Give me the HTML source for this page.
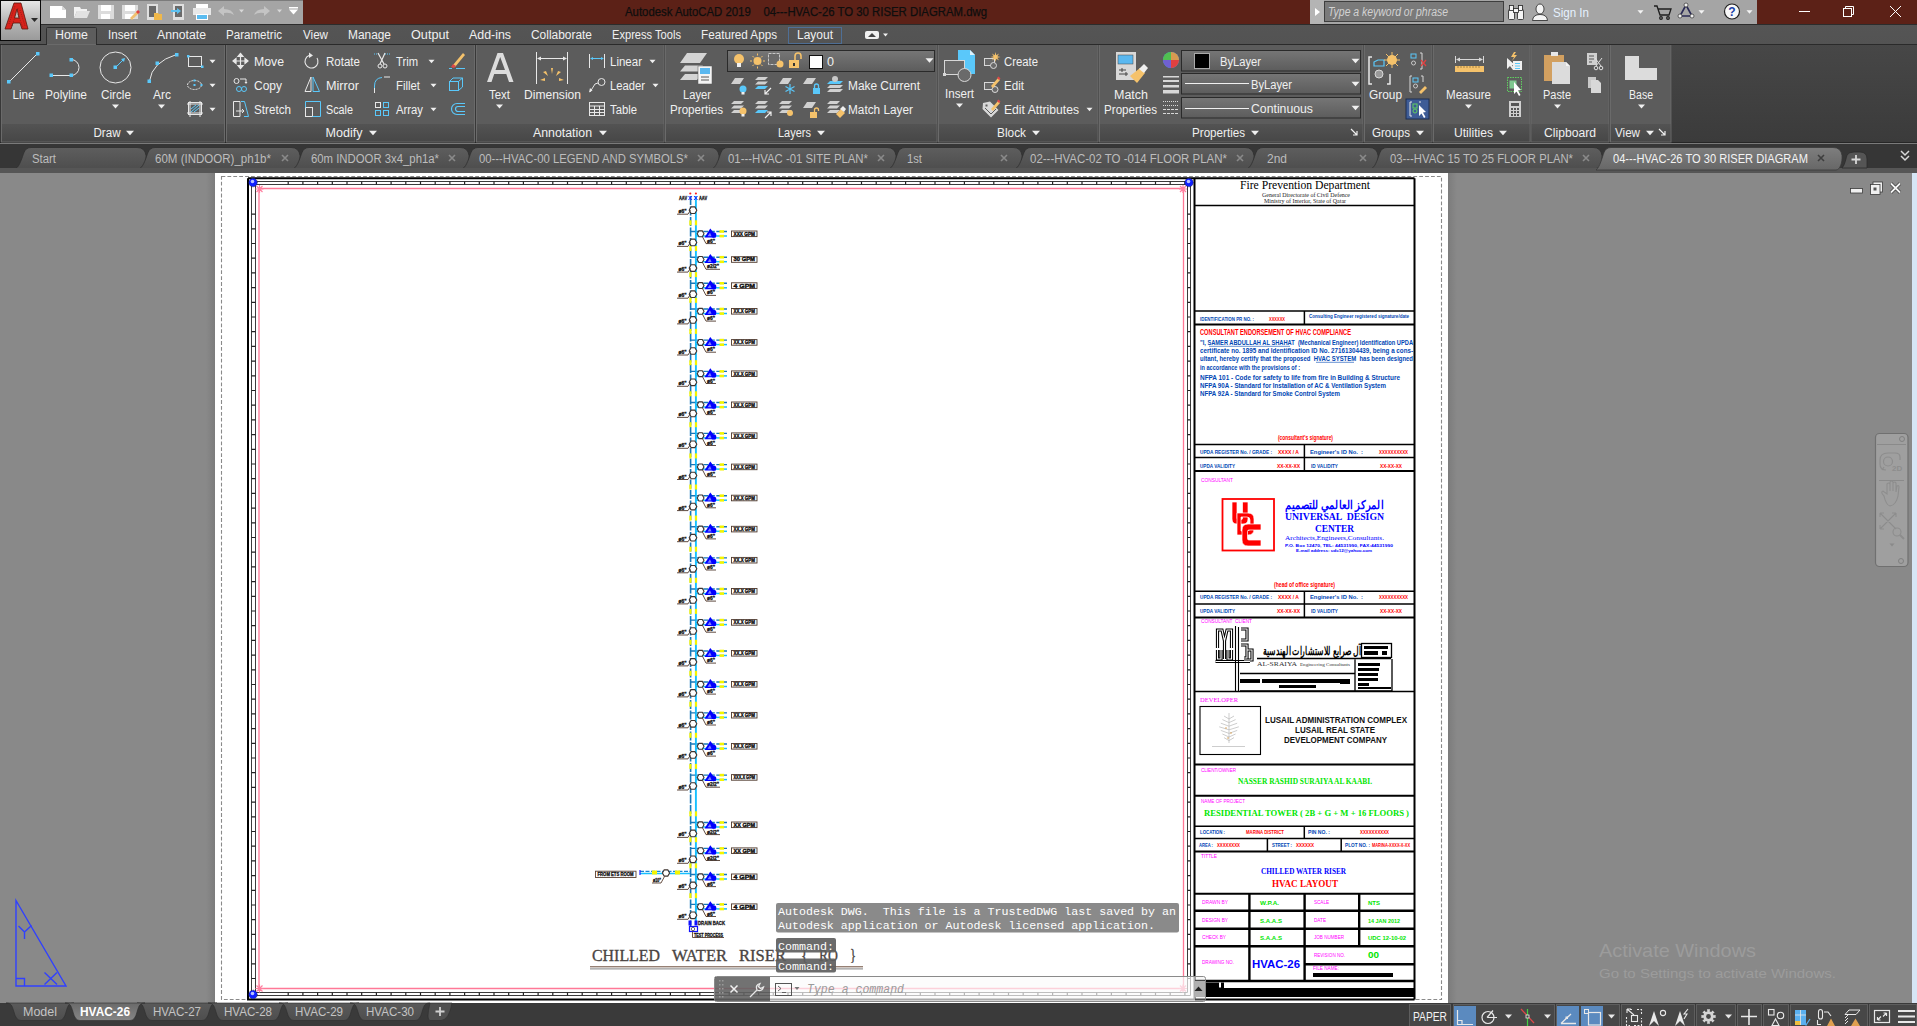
<!DOCTYPE html>
<html><head><meta charset="utf-8"><title>AutoCAD</title>
<style>html,body{margin:0;padding:0;width:1917px;height:1026px;overflow:hidden;background:#898989;}
svg{position:absolute;left:0;top:0;display:block;}
text{white-space:pre;}</style></head>
<body><svg width="1917" height="1026" viewBox="0 0 1917 1026" font-family="Liberation Sans, sans-serif">
<rect x="0" y="0" width="1917" height="24" fill="#5c2117"/>
<rect x="41" y="0" width="262" height="24" fill="#a5a5a5"/>
<rect x="41" y="0" width="262" height="1" fill="#7c7c7c"/>
<rect x="1310" y="0" width="447" height="24" fill="#a5a5a5"/>
<rect x="1310" y="0" width="14" height="24" fill="#b4b4b4"/>
<path d="M1315,8 L1320,12 L1315,16 Z" fill="#ffffff"/>
<rect x="1324.5" y="1.5" width="179" height="20" fill="#7a7a7a" stroke="#3e3e3e" stroke-width="1"/>
<text x="1328" y="16" font-size="12" fill="#d2d2d2" text-anchor="start" font-weight="normal" font-style="italic" font-family="Liberation Sans" textLength="120" lengthAdjust="spacingAndGlyphs" >Type a keyword or phrase</text>
<g fill="#f4f4f4" stroke="#222" stroke-width="0.8"><rect x="1508.5" y="9.5" width="6" height="10" rx="1"/><rect x="1517.5" y="9.5" width="6" height="10" rx="1"/><rect x="1509.5" y="5.5" width="4" height="5"/><rect x="1518.5" y="5.5" width="4" height="5"/><rect x="1513.5" y="8.5" width="5" height="4"/></g>
<g fill="#f4f4f4" stroke="#222" stroke-width="0.8"><ellipse cx="1540" cy="9" rx="4" ry="5"/><path d="M1532.5,20.5 Q1533,14.5 1540,14.5 Q1547,14.5 1547.5,20.5 Z"/></g>
<text x="1553" y="17" font-size="13" fill="#e6f2ff" text-anchor="start" font-weight="normal" font-style="normal" font-family="Liberation Sans" textLength="36" lengthAdjust="spacingAndGlyphs" >Sign In</text>
<path d="M1637.5,10.25 L1643.5,10.25 L1640.5,13.75 Z" fill="#f4f4f4"/>
<g fill="none" stroke="#1e1e1e" stroke-width="1.3"><path d="M1654,6 L1657,6 L1660,15 L1669,15 L1671,9 L1658,9"/><circle cx="1661" cy="18" r="1.3"/><circle cx="1668" cy="18" r="1.3"/></g>
<g fill="none" stroke="#2a2a55" stroke-width="1.6"><path d="M1686,5 L1680,16 L1692,16 Z"/></g><g fill="#f0f0f0" stroke="#333" stroke-width="0.7"><circle cx="1686" cy="5" r="2"/><circle cx="1680" cy="16" r="2"/><circle cx="1692" cy="16" r="2"/></g>
<path d="M1698.5,10.25 L1704.5,10.25 L1701.5,13.75 Z" fill="#f4f4f4"/>
<circle cx="1732" cy="11.5" r="7.5" fill="#f8f8f8" stroke="#222" stroke-width="1.2"/>
<text x="1732" y="16" font-size="12" fill="#1a3fa8" text-anchor="middle" font-weight="bold" font-style="normal" font-family="Liberation Sans" >?</text>
<path d="M1746.5,10.25 L1752.5,10.25 L1749.5,13.75 Z" fill="#f4f4f4"/>
<g stroke="#ffffff" stroke-width="1" fill="none"><path d="M1799,11.5 L1810,11.5"/><rect x="1843.5" y="8.5" width="8" height="8"/><path d="M1845.5,8.5 L1845.5,6.5 L1853.5,6.5 L1853.5,14.5 L1851.5,14.5"/><path d="M1890,6 L1901,17 M1901,6 L1890,17"/></g>
<text x="625" y="16" font-size="12.5" fill="#0e0e0e" text-anchor="start" font-weight="normal" font-style="normal" font-family="Liberation Sans" textLength="362" lengthAdjust="spacingAndGlyphs" stroke="#0e0e0e" stroke-width="0.25">Autodesk AutoCAD 2019    04---HVAC-26 TO 30 RISER DIAGRAM.dwg</text>
<path d="M50,6 L62,6 L66,10 L66,18 L50,18 Z" fill="#ffffff"/><path d="M62,6 L62,10 L66,10 Z" fill="#d8d8d8"/>
<path d="M74,7 L80,7 L81,9 L87,9 L87,11 L77,11 L74,18 Z" fill="#f2f2f2"/><path d="M77,11 L90,11 L87,18 L74,18 Z" fill="#e2e2e2"/>
<path d="M98,5 L114,5 L114,19 L98,19 Z" fill="#dcdcdc"/><rect x="101" y="5" width="10" height="6" fill="#ffffff"/><rect x="101" y="14" width="9" height="5" fill="#ffffff"/>
<path d="M122,5 L138,5 L138,19 L122,19 Z" fill="#dcdcdc"/><rect x="125" y="5" width="10" height="6" fill="#ffffff"/><rect x="125" y="14" width="9" height="5" fill="#ffffff"/><path d="M130,18 L137,11 L139,13 L132,20 Z" fill="#f0c070"/><path d="M136,12 L138,10 L140,12 L138,14 Z" fill="#e04040"/>
<rect x="147" y="4" width="11" height="16" fill="#e0e0e0"/><rect x="149" y="6" width="7" height="11" fill="#6a6a6a"/><path d="M154,13 L158,13 L159,14 L162,14 L162,20 L154,20 Z" fill="#f0b84a"/>
<rect x="173" y="4" width="11" height="16" fill="#e0e0e0"/><rect x="175" y="6" width="7" height="11" fill="#6a6a6a"/><path d="M171,10 L177,10 L177,8 L181,11 L177,14 L177,12 L171,12 Z" fill="#5bc0f0"/>
<rect x="196" y="4" width="12" height="5" fill="#ffffff"/><rect x="193" y="8" width="18" height="7" fill="#e8e8e8"/><rect x="196" y="14" width="12" height="6" fill="#ffffff"/><rect x="197" y="15" width="10" height="4" fill="#5bbcf0"/>
<path d="M218,11 L224,6 L224,9 Q232,9 234,15 Q230,12 224,13 L224,16 Z" fill="#c4c4c4"/>
<path d="M239.0,9.5 L244.0,9.5 L241.5,12.5 Z" fill="#d8d8d8"/>
<path d="M270,11 L264,6 L264,9 Q256,9 254,15 Q258,12 264,13 L264,16 Z" fill="#c4c4c4"/>
<path d="M277.0,9.5 L282.0,9.5 L279.5,12.5 Z" fill="#d8d8d8"/>
<rect x="289" y="7" width="9" height="1.5" fill="#ffffff"/><path d="M289.0,9.5 L298.0,9.5 L293.5,14.5 Z" fill="#ffffff"/>
<defs><linearGradient id="appg" x1="0" y1="0" x2="0" y2="1"><stop offset="0" stop-color="#e6e6e6"/><stop offset="0.5" stop-color="#b8b8b8"/><stop offset="1" stop-color="#9a9a9a"/></linearGradient><linearGradient id="tabrow" x1="0" y1="0" x2="0" y2="1"><stop offset="0" stop-color="#555555"/><stop offset="1" stop-color="#535353"/></linearGradient><linearGradient id="ptitle" x1="0" y1="0" x2="0" y2="1"><stop offset="0" stop-color="#535353"/><stop offset="1" stop-color="#474747"/></linearGradient><linearGradient id="emptyg" x1="0" y1="0" x2="0" y2="1"><stop offset="0" stop-color="#474747"/><stop offset="1" stop-color="#3b3b3b"/></linearGradient><linearGradient id="dtab" x1="0" y1="0" x2="0" y2="1"><stop offset="0" stop-color="#5e5e5e"/><stop offset="1" stop-color="#4e4e4e"/></linearGradient><linearGradient id="dtaba" x1="0" y1="0" x2="0" y2="1"><stop offset="0" stop-color="#7e7e7e"/><stop offset="1" stop-color="#676767"/></linearGradient><linearGradient id="combo" x1="0" y1="0" x2="0" y2="1"><stop offset="0" stop-color="#767676"/><stop offset="1" stop-color="#5c5c5c"/></linearGradient></defs>
<rect x="0" y="24" width="1917" height="20" fill="url(#tabrow)"/>
<rect x="0" y="24" width="1917" height="1" fill="#2c2c2c"/>
<rect x="0" y="0" width="41" height="41" fill="#0a0a0a"/>
<rect x="1" y="1" width="39" height="39" fill="url(#appg)"/>
<path d="M5,29 L14,3 L21,3 L28,29 L22,29 L20,23 L13,23 L11,29 Z M14.5,18 L19,18 L17,9 Z" fill="#d8221c" stroke="#5a1a10" stroke-width="0.8"/>
<path d="M9,24 L15,6 M12,26 L18,8 M20,10 L25,26 M18,14 L23,28" stroke="#7a1a12" stroke-width="0.8" stroke-dasharray="1,1.2" opacity="0.8"/>
<path d="M31,18 L38,18 L34.5,22 Z" fill="#2a2a2a"/>
<path d="M46.5,45 L46.5,28.5 Q46.5,27.5 47.5,27.5 L95.5,27.5 Q96.5,27.5 96.5,28.5 L96.5,45" fill="#5d5d5d" stroke="#2e2e2e" stroke-width="1"/>
<text x="55" y="39" font-size="12.5" fill="#f0f0f0" text-anchor="start" font-weight="normal" font-style="normal" font-family="Liberation Sans" textLength="33" lengthAdjust="spacingAndGlyphs" >Home</text>
<text x="108" y="39" font-size="12.5" fill="#f0f0f0" text-anchor="start" font-weight="normal" font-style="normal" font-family="Liberation Sans" textLength="29" lengthAdjust="spacingAndGlyphs" >Insert</text>
<text x="157" y="39" font-size="12.5" fill="#f0f0f0" text-anchor="start" font-weight="normal" font-style="normal" font-family="Liberation Sans" textLength="49" lengthAdjust="spacingAndGlyphs" >Annotate</text>
<text x="226" y="39" font-size="12.5" fill="#f0f0f0" text-anchor="start" font-weight="normal" font-style="normal" font-family="Liberation Sans" textLength="56" lengthAdjust="spacingAndGlyphs" >Parametric</text>
<text x="303" y="39" font-size="12.5" fill="#f0f0f0" text-anchor="start" font-weight="normal" font-style="normal" font-family="Liberation Sans" textLength="25" lengthAdjust="spacingAndGlyphs" >View</text>
<text x="348" y="39" font-size="12.5" fill="#f0f0f0" text-anchor="start" font-weight="normal" font-style="normal" font-family="Liberation Sans" textLength="43" lengthAdjust="spacingAndGlyphs" >Manage</text>
<text x="411" y="39" font-size="12.5" fill="#f0f0f0" text-anchor="start" font-weight="normal" font-style="normal" font-family="Liberation Sans" textLength="38" lengthAdjust="spacingAndGlyphs" >Output</text>
<text x="469" y="39" font-size="12.5" fill="#f0f0f0" text-anchor="start" font-weight="normal" font-style="normal" font-family="Liberation Sans" textLength="42" lengthAdjust="spacingAndGlyphs" >Add-ins</text>
<text x="531" y="39" font-size="12.5" fill="#f0f0f0" text-anchor="start" font-weight="normal" font-style="normal" font-family="Liberation Sans" textLength="61" lengthAdjust="spacingAndGlyphs" >Collaborate</text>
<text x="612" y="39" font-size="12.5" fill="#f0f0f0" text-anchor="start" font-weight="normal" font-style="normal" font-family="Liberation Sans" textLength="69" lengthAdjust="spacingAndGlyphs" >Express Tools</text>
<text x="701" y="39" font-size="12.5" fill="#f0f0f0" text-anchor="start" font-weight="normal" font-style="normal" font-family="Liberation Sans" textLength="76" lengthAdjust="spacingAndGlyphs" >Featured Apps</text>
<text x="797" y="39" font-size="12.5" fill="#f0f0f0" text-anchor="start" font-weight="normal" font-style="normal" font-family="Liberation Sans" textLength="36" lengthAdjust="spacingAndGlyphs" >Layout</text>
<rect x="788.5" y="27.5" width="53" height="16" fill="none" stroke="#4a8ad8" stroke-width="1" stroke-dasharray="1,1"/>
<rect x="865" y="31" width="14" height="8" rx="2" fill="#f0f0f0"/><path d="M868,37 L872,33 L876,37 Z" fill="#444"/><path d="M883.0,33.5 L888.0,33.5 L885.5,36.5 Z" fill="#f0f0f0"/>
<rect x="0" y="44" width="1917" height="99" fill="#383838"/>
<rect x="1672" y="44" width="245" height="98" fill="url(#emptyg)"/>
<rect x="0" y="142" width="1917" height="1" fill="#262626"/>
<rect x="0" y="44" width="1917" height="1" fill="#2a2a2a"/>
<rect x="0" y="143" width="1917" height="1" fill="#7a7a7a"/>
<rect x="1.5" y="44.5" width="223.0" height="97.5" fill="#5c5c5c" stroke="#6a6a6a" stroke-width="1"/>
<rect x="2.0" y="124" width="222.0" height="17.5" fill="url(#ptitle)"/>
<text x="93.5" y="137" font-size="12.5" fill="#f0f0f0" text-anchor="start" font-weight="normal" font-style="normal" font-family="Liberation Sans" textLength="27" lengthAdjust="spacingAndGlyphs" >Draw</text>
<path d="M126.0,130.75 L134.0,130.75 L130,135.25 Z" fill="#f0f0f0"/>
<rect x="226.5" y="44.5" width="248.0" height="97.5" fill="#5c5c5c" stroke="#6a6a6a" stroke-width="1"/>
<rect x="227.0" y="124" width="247.0" height="17.5" fill="url(#ptitle)"/>
<text x="325.5" y="137" font-size="12.5" fill="#f0f0f0" text-anchor="start" font-weight="normal" font-style="normal" font-family="Liberation Sans" textLength="37" lengthAdjust="spacingAndGlyphs" >Modify</text>
<path d="M369.0,130.75 L377.0,130.75 L373,135.25 Z" fill="#f0f0f0"/>
<rect x="476.5" y="44.5" width="187.5" height="97.5" fill="#5c5c5c" stroke="#6a6a6a" stroke-width="1"/>
<rect x="477.0" y="124" width="186.5" height="17.5" fill="url(#ptitle)"/>
<text x="533" y="137" font-size="12.5" fill="#f0f0f0" text-anchor="start" font-weight="normal" font-style="normal" font-family="Liberation Sans" textLength="59" lengthAdjust="spacingAndGlyphs" >Annotation</text>
<path d="M599.0,130.75 L607.0,130.75 L603,135.25 Z" fill="#f0f0f0"/>
<rect x="665.5" y="44.5" width="271.5" height="97.5" fill="#5c5c5c" stroke="#6a6a6a" stroke-width="1"/>
<rect x="666.0" y="124" width="270.5" height="17.5" fill="url(#ptitle)"/>
<text x="778" y="137" font-size="12.5" fill="#f0f0f0" text-anchor="start" font-weight="normal" font-style="normal" font-family="Liberation Sans" textLength="33" lengthAdjust="spacingAndGlyphs" >Layers</text>
<path d="M817.0,130.75 L825.0,130.75 L821,135.25 Z" fill="#f0f0f0"/>
<rect x="938.5" y="44.5" width="159.5" height="97.5" fill="#5c5c5c" stroke="#6a6a6a" stroke-width="1"/>
<rect x="939.0" y="124" width="158.5" height="17.5" fill="url(#ptitle)"/>
<text x="997" y="137" font-size="12.5" fill="#f0f0f0" text-anchor="start" font-weight="normal" font-style="normal" font-family="Liberation Sans" textLength="29" lengthAdjust="spacingAndGlyphs" >Block</text>
<path d="M1032.0,130.75 L1040.0,130.75 L1036,135.25 Z" fill="#f0f0f0"/>
<rect x="1099.5" y="44.5" width="263.5" height="97.5" fill="#5c5c5c" stroke="#6a6a6a" stroke-width="1"/>
<rect x="1100.0" y="124" width="262.5" height="17.5" fill="url(#ptitle)"/>
<text x="1192" y="137" font-size="12.5" fill="#f0f0f0" text-anchor="start" font-weight="normal" font-style="normal" font-family="Liberation Sans" textLength="53" lengthAdjust="spacingAndGlyphs" >Properties</text>
<path d="M1251.0,130.75 L1259.0,130.75 L1255,135.25 Z" fill="#f0f0f0"/>
<path d="M1351,129 L1357,135 M1357,131 L1357,135 L1353,135" stroke="#f0f0f0" stroke-width="1.2" fill="none"/>
<rect x="1364.5" y="44.5" width="67.5" height="97.5" fill="#5c5c5c" stroke="#6a6a6a" stroke-width="1"/>
<rect x="1365.0" y="124" width="66.5" height="17.5" fill="url(#ptitle)"/>
<text x="1372" y="137" font-size="12.5" fill="#f0f0f0" text-anchor="start" font-weight="normal" font-style="normal" font-family="Liberation Sans" textLength="38" lengthAdjust="spacingAndGlyphs" >Groups</text>
<path d="M1416.0,130.75 L1424.0,130.75 L1420,135.25 Z" fill="#f0f0f0"/>
<rect x="1433.5" y="44.5" width="96.5" height="97.5" fill="#5c5c5c" stroke="#6a6a6a" stroke-width="1"/>
<rect x="1434.0" y="124" width="95.5" height="17.5" fill="url(#ptitle)"/>
<text x="1454" y="137" font-size="12.5" fill="#f0f0f0" text-anchor="start" font-weight="normal" font-style="normal" font-family="Liberation Sans" textLength="39" lengthAdjust="spacingAndGlyphs" >Utilities</text>
<path d="M1499.0,130.75 L1507.0,130.75 L1503,135.25 Z" fill="#f0f0f0"/>
<rect x="1531" y="44.5" width="78" height="97.5" fill="#5c5c5c" stroke="#6a6a6a" stroke-width="1"/>
<rect x="1531.5" y="124" width="77" height="17.5" fill="url(#ptitle)"/>
<text x="1544" y="137" font-size="12.5" fill="#f0f0f0" text-anchor="start" font-weight="normal" font-style="normal" font-family="Liberation Sans" textLength="52" lengthAdjust="spacingAndGlyphs" >Clipboard</text>
<rect x="1610.5" y="44.5" width="60.5" height="97.5" fill="#5c5c5c" stroke="#6a6a6a" stroke-width="1"/>
<rect x="1611.0" y="124" width="59.5" height="17.5" fill="url(#ptitle)"/>
<text x="1615" y="137" font-size="12.5" fill="#f0f0f0" text-anchor="start" font-weight="normal" font-style="normal" font-family="Liberation Sans" textLength="25" lengthAdjust="spacingAndGlyphs" >View</text>
<path d="M1646.0,130.75 L1654.0,130.75 L1650,135.25 Z" fill="#f0f0f0"/>
<path d="M1659,129 L1665,135 M1665,131 L1665,135 L1661,135" stroke="#f0f0f0" stroke-width="1.2" fill="none"/>
<path d="M9,82 L37,54" stroke="#e8e8e8" stroke-width="1"/><rect x="7" y="80" width="3.5" height="3.5" fill="#5ac8fa"/><rect x="36" y="52" width="3.5" height="3.5" fill="#5ac8fa"/>
<path d="M52,75.5 L71,75.5 A8,8 0 0 0 71,59.5" stroke="#e8e8e8" stroke-width="1" fill="none"/><rect x="49.5" y="73.5" width="3.5" height="3.5" fill="#5ac8fa"/><rect x="69.5" y="73.5" width="3.5" height="3.5" fill="#5ac8fa"/><rect x="69.5" y="58" width="3.5" height="3.5" fill="#5ac8fa"/>
<circle cx="115.5" cy="67.5" r="15.5" stroke="#e8e8e8" stroke-width="1" fill="none"/><path d="M115.5,67.5 L124,59" stroke="#5ac8fa" stroke-width="1"/><path d="M125,58 L121,59 L124,62 Z" fill="#5ac8fa"/><rect x="113.5" y="65.5" width="3.5" height="3.5" fill="#5ac8fa"/>
<path d="M149.5,81 Q152,62 176.5,54.5" stroke="#e8e8e8" stroke-width="1" fill="none"/><rect x="147.5" y="79.5" width="3.5" height="3.5" fill="#5ac8fa"/><rect x="155.5" y="61.5" width="3.5" height="3.5" fill="#5ac8fa"/><rect x="175" y="53" width="3.5" height="3.5" fill="#5ac8fa"/>
<text x="12.5" y="99" font-size="12.5" fill="#f0f0f0" text-anchor="start" font-weight="normal" font-style="normal" font-family="Liberation Sans" textLength="22" lengthAdjust="spacingAndGlyphs" >Line</text>
<text x="45" y="99" font-size="12.5" fill="#f0f0f0" text-anchor="start" font-weight="normal" font-style="normal" font-family="Liberation Sans" textLength="42" lengthAdjust="spacingAndGlyphs" >Polyline</text>
<text x="101" y="99" font-size="12.5" fill="#f0f0f0" text-anchor="start" font-weight="normal" font-style="normal" font-family="Liberation Sans" textLength="30" lengthAdjust="spacingAndGlyphs" >Circle</text>
<text x="153" y="99" font-size="12.5" fill="#f0f0f0" text-anchor="start" font-weight="normal" font-style="normal" font-family="Liberation Sans" textLength="18" lengthAdjust="spacingAndGlyphs" >Arc</text>
<path d="M112.0,104.5 L119.0,104.5 L115.5,108.5 Z" fill="#f0f0f0"/><path d="M158.0,104.5 L165.0,104.5 L161.5,108.5 Z" fill="#f0f0f0"/>
<rect x="188.5" y="56.5" width="13" height="10" stroke="#e8e8e8" fill="none"/><rect x="187" y="55" width="2.5" height="2.5" fill="#5ac8fa"/><rect x="201" y="65.5" width="2.5" height="2.5" fill="#5ac8fa"/><path d="M209.5,59.75 L215.5,59.75 L212.5,63.25 Z" fill="#f0f0f0"/>
<ellipse cx="194.5" cy="85" rx="7" ry="4.5" stroke="#e8e8e8" fill="none" stroke-dasharray="2,1"/><rect x="193.5" y="79.5" width="2" height="2" fill="#5ac8fa"/><rect x="193.5" y="84" width="2" height="2" fill="#5ac8fa"/><rect x="200.5" y="84" width="2" height="2" fill="#5ac8fa"/><path d="M209.5,83.75 L215.5,83.75 L212.5,87.25 Z" fill="#f0f0f0"/>
<rect x="188.5" y="102.5" width="13" height="12" stroke="#e8e8e8" fill="none"/><path d="M187,104 L203,104 M187,113 L203,113 M190,101 L190,117 M200,101 L200,117" stroke="#e8e8e8"/><path d="M191,112 L199,105 M191,109 L196,105 M194,112 L199,108" stroke="#5ac8fa"/><path d="M209.5,107.75 L215.5,107.75 L212.5,111.25 Z" fill="#f0f0f0"/>
<g stroke="#e8e8e8" stroke-width="1.2" fill="#e8e8e8"><path d="M233,61 L248,61 M240.5,53.5 L240.5,68.5" /><path d="M233,61 L236,58.5 L236,63.5 Z M248,61 L245,58.5 L245,63.5 Z M240.5,53.5 L238,56.5 L243,56.5 Z M240.5,68.5 L238,65.5 L243,65.5 Z"/></g>
<text x="254" y="66" font-size="12.5" fill="#f0f0f0" text-anchor="start" font-weight="normal" font-style="normal" font-family="Liberation Sans" textLength="30" lengthAdjust="spacingAndGlyphs" >Move</text>
<path d="M317,58 A6.5,6.5 0 1 1 309,55.5" stroke="#e8e8e8" stroke-width="1.1" fill="none"/><path d="M309,52.5 L313,55.5 L309,58 Z" fill="#e8e8e8"/>
<text x="326" y="66" font-size="12.5" fill="#f0f0f0" text-anchor="start" font-weight="normal" font-style="normal" font-family="Liberation Sans" textLength="34" lengthAdjust="spacingAndGlyphs" >Rotate</text>
<path d="M374,54 L379,54 M385,54 L390,54" stroke="#5ac8fa" stroke-dasharray="1,1"/><path d="M378,53 L384,64 M385,53 L380,64" stroke="#e8e8e8" stroke-width="1.2"/><circle cx="380" cy="66" r="2" stroke="#e8e8e8" fill="none"/><circle cx="385" cy="66" r="2" stroke="#e8e8e8" fill="none"/>
<text x="396" y="66" font-size="12.5" fill="#f0f0f0" text-anchor="start" font-weight="normal" font-style="normal" font-family="Liberation Sans" textLength="22" lengthAdjust="spacingAndGlyphs" >Trim</text><path d="M428.5,59.75 L434.5,59.75 L431.5,63.25 Z" fill="#f0f0f0"/>
<path d="M453,65 L463,53 L465,55 L455,67 Z" fill="#f5c26b"/><path d="M451,67 L453,64 L456,66 L454,68 Z" fill="#e04848"/><path d="M449,68.5 L452,68.5 M456,68.5 L465,68.5" stroke="#5ac8fa"/>
<circle cx="236.5" cy="81" r="2.5" stroke="#e8e8e8" fill="none"/><path d="M240,79 L246,79 L246,83" stroke="#e8e8e8" fill="none"/><path d="M244.5,82 L247.5,82 L246,84 Z" fill="#e8e8e8"/><circle cx="239" cy="89" r="2.5" stroke="#5ac8fa" fill="none"/><circle cx="244" cy="89" r="2.5" stroke="#5ac8fa" fill="none"/>
<text x="254" y="90" font-size="12.5" fill="#f0f0f0" text-anchor="start" font-weight="normal" font-style="normal" font-family="Liberation Sans" textLength="28" lengthAdjust="spacingAndGlyphs" >Copy</text>
<path d="M305,91.5 L311,77 L311,91.5 Z" stroke="#e8e8e8" fill="none"/><path d="M313,77 L313,91.5 L319.5,91.5 Z" stroke="#5ac8fa" fill="none"/>
<text x="326" y="90" font-size="12.5" fill="#f0f0f0" text-anchor="start" font-weight="normal" font-style="normal" font-family="Liberation Sans" textLength="33" lengthAdjust="spacingAndGlyphs" >Mirror</text>
<path d="M374.5,93 L374.5,86 Q374.5,78 382,77.5" stroke="#5ac8fa" fill="none"/><path d="M374.5,93 L374.5,88" stroke="#e8e8e8"/><path d="M384,77 L390,77" stroke="#e8e8e8"/>
<text x="396" y="90" font-size="12.5" fill="#f0f0f0" text-anchor="start" font-weight="normal" font-style="normal" font-family="Liberation Sans" textLength="24" lengthAdjust="spacingAndGlyphs" >Fillet</text><path d="M430.5,83.75 L436.5,83.75 L433.5,87.25 Z" fill="#f0f0f0"/>
<g stroke="#5ac8fa" fill="none"><rect x="449.5" y="81.5" width="9" height="9"/><path d="M449.5,81.5 L453,78 L462.5,78 L458.5,81.5 M462.5,78 L462.5,87 L458.5,90.5"/></g>
<path d="M233.5,116.5 L233.5,101.5 L240,101.5 L240,116.5 Z" stroke="#e8e8e8" fill="none"/><path d="M241,101.5 L244.5,101.5 L248.5,116.5 L244,116.5" stroke="#5ac8fa" fill="none"/><path d="M236,111 L244,111 L242,109 M244,111 L242,113" stroke="#e8e8e8" fill="none"/>
<text x="254" y="114" font-size="12.5" fill="#f0f0f0" text-anchor="start" font-weight="normal" font-style="normal" font-family="Liberation Sans" textLength="37" lengthAdjust="spacingAndGlyphs" >Stretch</text>
<rect x="305.5" y="107.5" width="7" height="9" stroke="#e8e8e8" fill="none"/><path d="M305.5,107.5 L305.5,101.5 L320.5,101.5 L320.5,116.5 L312.5,116.5" stroke="#5ac8fa" fill="none"/>
<text x="326" y="114" font-size="12.5" fill="#f0f0f0" text-anchor="start" font-weight="normal" font-style="normal" font-family="Liberation Sans" textLength="27" lengthAdjust="spacingAndGlyphs" >Scale</text>
<g stroke="#5ac8fa" fill="none"><rect x="375.5" y="102.5" width="5" height="5"/><rect x="383.5" y="102.5" width="5" height="5"/><rect x="375.5" y="110.5" width="5" height="5"/><rect x="383.5" y="110.5" width="5" height="5"/></g><rect x="375.5" y="102.5" width="5" height="5" stroke="#e8e8e8" fill="none"/>
<text x="396" y="114" font-size="12.5" fill="#f0f0f0" text-anchor="start" font-weight="normal" font-style="normal" font-family="Liberation Sans" textLength="27" lengthAdjust="spacingAndGlyphs" >Array</text><path d="M430.5,107.75 L436.5,107.75 L433.5,111.25 Z" fill="#f0f0f0"/>
<path d="M465,103.5 L457,103.5 A5,5 0 0 0 457,114.5 L465,114.5 M465,106.5 L458,106.5 A2.2,2.2 0 0 0 458,111.5 L465,111.5" stroke="#5ac8fa" stroke-width="1.2" fill="none"/>
<path d="M487,82 L497.5,53 L503,53 L513.5,82 L509,82 L506.3,74 L494.2,74 L491.5,82 Z M495.5,70 L505,70 L500.2,57 Z" fill="#dcdcdc"/>
<text x="489" y="99" font-size="12.5" fill="#f0f0f0" text-anchor="start" font-weight="normal" font-style="normal" font-family="Liberation Sans" textLength="21" lengthAdjust="spacingAndGlyphs" >Text</text><path d="M496.0,104.5 L503.0,104.5 L499.5,108.5 Z" fill="#f0f0f0"/>
<path d="M536.5,52 L536.5,84 M567.5,52 L567.5,84 M538,58.5 L566,58.5" stroke="#e8e8e8" fill="none"/><path d="M537,58.5 L541,56.5 L541,60.5 Z M567,58.5 L563,56.5 L563,60.5 Z" fill="#e8e8e8"/><g fill="#f5c26b"><path d="M551,68 L552,74 L553,68 Z"/><path d="M543,72 L548,76 L546,71 Z"/><path d="M561,72 L556,76 L558,71 Z"/><path d="M540,80 L545,78 L545,81 Z"/><path d="M564,80 L559,78 L559,81 Z"/></g>
<text x="524" y="99" font-size="12.5" fill="#f0f0f0" text-anchor="start" font-weight="normal" font-style="normal" font-family="Liberation Sans" textLength="57" lengthAdjust="spacingAndGlyphs" >Dimension</text>
<path d="M589.5,54 L589.5,68 M604.5,54 L604.5,68" stroke="#e8e8e8"/><path d="M591,58.5 L603,58.5" stroke="#5ac8fa"/><path d="M590,58.5 L593,57 L593,60 Z M604,58.5 L601,57 L601,60 Z" fill="#5ac8fa"/>
<text x="610" y="66" font-size="12.5" fill="#f0f0f0" text-anchor="start" font-weight="normal" font-style="normal" font-family="Liberation Sans" textLength="32" lengthAdjust="spacingAndGlyphs" >Linear</text><path d="M649.5,59.75 L655.5,59.75 L652.5,63.25 Z" fill="#f0f0f0"/>
<circle cx="601.5" cy="82" r="3.5" stroke="#e8e8e8" fill="none"/><path d="M598,83 L595,84 L590,92" stroke="#e8e8e8" fill="none"/><path d="M589,92.5 L590,88 L592.5,90.5 Z" fill="#e8e8e8"/>
<text x="610" y="90" font-size="12.5" fill="#f0f0f0" text-anchor="start" font-weight="normal" font-style="normal" font-family="Liberation Sans" textLength="35" lengthAdjust="spacingAndGlyphs" >Leader</text><path d="M652.5,83.75 L658.5,83.75 L655.5,87.25 Z" fill="#f0f0f0"/>
<g stroke="#e8e8e8" fill="none"><rect x="589.5" y="102.5" width="15" height="13"/><path d="M589.5,106 L604.5,106 M589.5,109.5 L604.5,109.5 M589.5,112.5 L604.5,112.5 M594.5,106 L594.5,115.5 M599.5,106 L599.5,115.5"/></g>
<text x="610" y="114" font-size="12.5" fill="#f0f0f0" text-anchor="start" font-weight="normal" font-style="normal" font-family="Liberation Sans" textLength="27" lengthAdjust="spacingAndGlyphs" >Table</text>
<g fill="#d4d4d4"><path d="M680,80 L685,74 L702,74 L697,80 Z"/><path d="M680,71.5 L685,65.5 L703,65.5 L698,71.5 Z"/><path d="M680,63 L687,53 L707,53 L700,63 Z"/></g>
<rect x="698" y="66" width="14" height="18" fill="#f4f4f4" stroke="#555" stroke-width="0.5"/><rect x="700" y="68" width="10" height="6" fill="#5ab8f0"/><path d="M701,77 L709,77 M701,80 L709,80" stroke="#333" stroke-width="0.8"/>
<text x="683" y="99" font-size="12.5" fill="#f0f0f0" text-anchor="start" font-weight="normal" font-style="normal" font-family="Liberation Sans" textLength="28" lengthAdjust="spacingAndGlyphs" >Layer</text>
<text x="670" y="114" font-size="12.5" fill="#f0f0f0" text-anchor="start" font-weight="normal" font-style="normal" font-family="Liberation Sans" textLength="53" lengthAdjust="spacingAndGlyphs" >Properties</text>
<rect x="727.5" y="50.5" width="207" height="21" fill="url(#combo)" stroke="#2a2a2a" stroke-width="1"/>
<circle cx="739" cy="59" r="5" fill="#f5c26b"/><rect x="737" y="63" width="4" height="4" fill="#f0f0f0"/>
<circle cx="757.5" cy="61" r="4" fill="#f5c26b"/><g stroke="#f5c26b" stroke-width="1"><path d="M757.5,53.5 L757.5,55.5 M757.5,66.5 L757.5,68.5 M750,61 L752,61 M763,61 L765,61 M752.5,56 L754,57.5 M761,64.5 L762.5,66 M752.5,66 L754,64.5 M761,57.5 L762.5,56"/></g>
<rect x="768.5" y="53.5" width="11" height="11" stroke="#c8c8c8" fill="#6a6a6a" stroke-dasharray="3,1"/><circle cx="780" cy="64" r="3.5" fill="#f5c26b"/>
<rect x="789" y="60" width="10" height="8" fill="#f5c26b"/><path d="M795,60 L795,56 A3,3 0 0 1 801,56 L801,59" stroke="#f5c26b" stroke-width="1.6" fill="none"/><rect x="793" y="63" width="2" height="3" fill="#333"/>
<rect x="809.5" y="55.5" width="13" height="13" fill="#ffffff" stroke="#111" stroke-width="1"/>
<text x="827" y="66" font-size="12.5" fill="#f0f0f0" text-anchor="start" font-weight="normal" font-style="normal" font-family="Liberation Sans" textLength="7" lengthAdjust="spacingAndGlyphs" >0</text><path d="M925.5,58.25 L933.5,58.25 L929.5,62.75 Z" fill="#f0f0f0"/>
<path d="M731,84 L735,78 L744,78 L740,84 Z" fill="#d0d0d0"/><circle cx="743" cy="89" r="3.5" fill="#5ac8fa"/><rect x="741.5" y="92" width="3" height="2.5" fill="#f0f0f0"/>
<path d="M755,80.0 L758,77.0 L768,77.0 L765,80.0 Z M755,84.5 L758,81.5 L768,81.5 L765,84.5 Z " fill="#d0d0d0"/><path d="M755,89 L758,86 L768,86 L765,89 Z" fill="#5ac8fa"/><path d="M771,88 L765,94 M765,90 L765,94 L769,94" stroke="#f0f0f0" stroke-width="1.2" fill="none"/>
<path d="M779,84 L783,78 L792,78 L788,84 Z" fill="#d0d0d0"/><g stroke="#5ac8fa" stroke-width="1.2"><path d="M790,84 L790,94 M785.5,86.5 L794.5,91.5 M785.5,91.5 L794.5,86.5"/></g>
<path d="M803,84 L807,78 L816,78 L812,84 Z" fill="#d0d0d0"/><rect x="813" y="88" width="7" height="6" fill="#5ac8fa"/><path d="M814.5,88 L814.5,86 A2,2 0 0 1 818.5,86 L818.5,88" stroke="#5ac8fa" stroke-width="1.3" fill="none"/>
<path d="M827,92 L830,89 L843,89 L840,92 Z M827,88 L830,85 L843,85 L840,88 Z" fill="#d0d0d0"/><path d="M827,84 L830,81 L843,81 L840,84 Z" fill="#5ac8fa"/><circle cx="835" cy="79" r="3" fill="#c8c8c8"/>
<text x="848" y="90" font-size="12.5" fill="#f0f0f0" text-anchor="start" font-weight="normal" font-style="normal" font-family="Liberation Sans" textLength="72" lengthAdjust="spacingAndGlyphs" >Make Current</text>
<path d="M731,104.0 L734,101.0 L744,101.0 L741,104.0 Z M731,108.5 L734,105.5 L744,105.5 L741,108.5 Z M731,113.0 L734,110.0 L744,110.0 L741,113.0 Z " fill="#d0d0d0"/><circle cx="743" cy="111" r="3.5" fill="#f5c26b"/><rect x="741.5" y="114" width="3" height="2.5" fill="#f0f0f0"/>
<path d="M755,104.0 L758,101.0 L768,101.0 L765,104.0 Z M755,108.5 L758,105.5 L768,105.5 L765,108.5 Z " fill="#d0d0d0"/><path d="M755,113 L758,110 L768,110 L765,113 Z" fill="#5ac8fa"/><path d="M765,118 L771,112 M767,112 L771,112 L771,116" stroke="#f0f0f0" stroke-width="1.2" fill="none"/>
<path d="M779,104.0 L782,101.0 L792,101.0 L789,104.0 Z M779,108.5 L782,105.5 L792,105.5 L789,108.5 Z M779,113.0 L782,110.0 L792,110.0 L789,113.0 Z " fill="#d0d0d0"/><circle cx="790" cy="113" r="3" fill="#f5c26b"/>
<path d="M803,108 L807,102 L816,102 L812,108 Z" fill="#d0d0d0"/><rect x="810" y="112" width="7" height="6" fill="#f5c26b"/><path d="M814.5,112 L814.5,110 A2,2 0 0 1 818.5,110 L818.5,111" stroke="#f5c26b" stroke-width="1.3" fill="none"/>
<path d="M827,104.0 L830,101.0 L840,101.0 L837,104.0 Z M827,108.5 L830,105.5 L840,105.5 L837,108.5 Z M827,113.0 L830,110.0 L840,110.0 L837,113.0 Z " fill="#d0d0d0"/><path d="M836,114 L841,109 L845,113 L840,118 Z" fill="#f5c26b"/><path d="M840,109 L843,106 L846,109 L844,112 Z" fill="#f0f0f0"/>
<text x="848" y="114" font-size="12.5" fill="#f0f0f0" text-anchor="start" font-weight="normal" font-style="normal" font-family="Liberation Sans" textLength="65" lengthAdjust="spacingAndGlyphs" >Match Layer</text>
<path d="M958,50 L970,50 L975,55 L975,74 L958,74 Z" fill="#5ac8fa"/><path d="M970,50 L970,55 L975,55 Z" fill="#dff2fb"/>
<rect x="944.5" y="60.5" width="20" height="14" fill="#6a6a6a" stroke="#d8d8d8" stroke-width="1"/><circle cx="964.5" cy="75" r="6.5" fill="#6a6a6a" stroke="#d8d8d8" stroke-width="1"/><rect x="943" y="73" width="3" height="3" fill="#d8d8d8"/>
<text x="945" y="98" font-size="12.5" fill="#f0f0f0" text-anchor="start" font-weight="normal" font-style="normal" font-family="Liberation Sans" textLength="29" lengthAdjust="spacingAndGlyphs" >Insert</text><path d="M956.0,103.5 L963.0,103.5 L959.5,107.5 Z" fill="#f0f0f0"/>
<rect x="984.5" y="58.5" width="10" height="7" fill="#6a6a6a" stroke="#d8d8d8"/><circle cx="993.5" cy="65.5" r="3" fill="#6a6a6a" stroke="#d8d8d8"/><polygon points="995.50,52.00 996.27,55.15 999.04,53.46 997.35,56.23 1000.50,57.00 997.35,57.77 999.04,60.54 996.27,58.85 995.50,62.00 994.73,58.85 991.96,60.54 993.65,57.77 990.50,57.00 993.65,56.23 991.96,53.46 994.73,55.15" fill="#f5c26b"/>
<text x="1004" y="66" font-size="12.5" fill="#f0f0f0" text-anchor="start" font-weight="normal" font-style="normal" font-family="Liberation Sans" textLength="34" lengthAdjust="spacingAndGlyphs" >Create</text>
<rect x="984.5" y="82.5" width="10" height="7" fill="#6a6a6a" stroke="#d8d8d8"/><circle cx="995" cy="89.5" r="3" fill="#6a6a6a" stroke="#d8d8d8"/><path d="M991,86 L998,78 L1000,80 L993,88 Z" fill="#f5c26b"/><path d="M997,78 L998.5,76.5 L1000.5,78.5 L999,80 Z" fill="#e04848"/>
<text x="1004" y="90" font-size="12.5" fill="#f0f0f0" text-anchor="start" font-weight="normal" font-style="normal" font-family="Liberation Sans" textLength="20" lengthAdjust="spacingAndGlyphs" >Edit</text>
<path d="M983,103 L990,101.5 L998.5,110 L991,117.5 L982.5,109 Z M985.5,104.5 L985.5,106.5 L987.5,106.5 L987.5,104.5 Z" fill="#d8d8d8" fill-rule="evenodd"/><path d="M985,108 L991,114 L996,109" stroke="#5b5b5b" stroke-width="1" fill="none"/><path d="M991,109 L998,101 L1000,103 L993,111 Z" fill="#f5c26b"/><path d="M997,101 L998.5,99.5 L1000.5,101.5 L999,103 Z" fill="#e04848"/>
<text x="1004" y="114" font-size="12.5" fill="#f0f0f0" text-anchor="start" font-weight="normal" font-style="normal" font-family="Liberation Sans" textLength="75" lengthAdjust="spacingAndGlyphs" >Edit Attributes</text><path d="M1086.5,107.75 L1092.5,107.75 L1089.5,111.25 Z" fill="#f0f0f0"/>
<rect x="1116" y="52" width="20" height="28" fill="#d8d8d8"/><rect x="1118" y="55" width="15" height="9" fill="#5ab8f0" stroke="#444" stroke-width="0.5"/><path d="M1119,70 L1126,70 M1119,74 L1128,74 M1122,68 L1122,72 M1126,72 L1126,76" stroke="#444" stroke-width="1"/>
<path d="M1130,76 L1140,68 L1145,73 L1137,83 Z" fill="#f5c26b"/><path d="M1139,69 L1144,64 L1148,68 L1144,73 Z" fill="#f0f0f0"/>
<text x="1114" y="99" font-size="12.5" fill="#f0f0f0" text-anchor="start" font-weight="normal" font-style="normal" font-family="Liberation Sans" textLength="34" lengthAdjust="spacingAndGlyphs" >Match</text>
<text x="1104" y="114" font-size="12.5" fill="#f0f0f0" text-anchor="start" font-weight="normal" font-style="normal" font-family="Liberation Sans" textLength="53" lengthAdjust="spacingAndGlyphs" >Properties</text>
<circle cx="1171" cy="60" r="8" fill="#4aa0e0"/><path d="M1171,60 L1171,52 A8,8 0 0 1 1179,60 Z" fill="#d89a50"/><path d="M1171,60 L1179,60 A8,8 0 0 1 1171,68 Z" fill="#e04040"/><path d="M1171,60 L1171,68 A8,8 0 0 1 1163,60 Z" fill="#7060d0"/><path d="M1171,60 L1163,60 A8,8 0 0 1 1171,52 Z" fill="#50c050"/>
<g fill="#d8d8d8"><rect x="1163" y="76" width="16" height="1.5"/><rect x="1163" y="80" width="16" height="2"/><rect x="1163" y="85" width="16" height="2.5"/><rect x="1163" y="90" width="16" height="3.5"/></g>
<g stroke="#d8d8d8" stroke-width="1" stroke-dasharray="1,1"><path d="M1163,101.5 L1179,101.5 M1163,105.5 L1179,105.5"/></g><g stroke="#d8d8d8" stroke-width="1" stroke-dasharray="3,1"><path d="M1163,109.5 L1179,109.5 M1163,113.5 L1179,113.5"/></g>
<rect x="1181.5" y="50.5" width="179" height="20.5" fill="url(#combo)" stroke="#2a2a2a" stroke-width="1"/><path d="M1351.5,58.75 L1359.5,58.75 L1355.5,63.25 Z" fill="#f0f0f0"/>
<rect x="1181.5" y="73.5" width="179" height="20.5" fill="url(#combo)" stroke="#2a2a2a" stroke-width="1"/><path d="M1351.5,81.75 L1359.5,81.75 L1355.5,86.25 Z" fill="#f0f0f0"/>
<rect x="1181.5" y="97.5" width="179" height="20.5" fill="url(#combo)" stroke="#2a2a2a" stroke-width="1"/><path d="M1351.5,105.75 L1359.5,105.75 L1355.5,110.25 Z" fill="#f0f0f0"/>
<rect x="1194.5" y="53.5" width="15" height="15" fill="#000" stroke="#aaa" stroke-width="1"/>
<text x="1220" y="66" font-size="12.5" fill="#f0f0f0" text-anchor="start" font-weight="normal" font-style="normal" font-family="Liberation Sans" textLength="41" lengthAdjust="spacingAndGlyphs" >ByLayer</text>
<path d="M1185,83.5 L1249,83.5 M1185,108.5 L1249,108.5" stroke="#f0f0f0" stroke-width="1"/>
<text x="1251" y="89" font-size="12.5" fill="#f0f0f0" text-anchor="start" font-weight="normal" font-style="normal" font-family="Liberation Sans" textLength="41" lengthAdjust="spacingAndGlyphs" >ByLayer</text>
<text x="1251" y="113" font-size="12.5" fill="#f0f0f0" text-anchor="start" font-weight="normal" font-style="normal" font-family="Liberation Sans" textLength="62" lengthAdjust="spacingAndGlyphs" >Continuous</text>
<path d="M1372,57 L1369,57 L1369,84 L1372,84 M1387,84 L1390,84 L1390,74" stroke="#e8e8e8" stroke-width="1.5" fill="none"/><path d="M1374,62 L1378,60 L1384,60 L1384,66 L1374,66 Z" fill="none" stroke="#5ac8fa" stroke-width="1.2"/><circle cx="1379" cy="74" r="4" fill="#9a9a9a" stroke="#d8d8d8"/><circle cx="1392" cy="60" r="5" fill="#f5c26b"/><g stroke="#f5c26b"><path d="M1392,52 L1392,68 M1384,60 L1400,60 M1386,54 L1398,66 M1386,66 L1398,54"/></g>
<text x="1369" y="99" font-size="12.5" fill="#f0f0f0" text-anchor="start" font-weight="normal" font-style="normal" font-family="Liberation Sans" textLength="33" lengthAdjust="spacingAndGlyphs" >Group</text>
<rect x="1411" y="54" width="5" height="4" stroke="#5ac8fa" fill="none"/><circle cx="1413.5" cy="63" r="2" stroke="#c8c8c8" fill="none"/><path d="M1420,53 L1422,53 L1422,69 L1420,69" stroke="#d8d8d8" fill="none"/><path d="M1421,60 L1426,66 M1426,60 L1421,66" stroke="#e04040" stroke-width="1.2"/>
<path d="M1412,76 L1410,76 L1410,92 L1412,92 M1421,76 L1423,76 L1423,82" stroke="#d8d8d8" fill="none"/><rect x="1413" y="78" width="5" height="4" stroke="#5ac8fa" fill="none"/><circle cx="1415.5" cy="86" r="2" stroke="#c8c8c8" fill="none"/><path d="M1419,92 L1425,86 L1427,88 L1421,94 Z" fill="#f5c26b"/>
<rect x="1406" y="99" width="23" height="20" fill="#3e5c96" stroke="#1e2e50" stroke-width="1"/>
<path d="M1412,102 L1410,102 L1410,116 L1412,116 M1419,102 L1421,102" stroke="#e8e8e8" fill="none"/><rect x="1413" y="104" width="4" height="4" stroke="#60d060" fill="none"/><circle cx="1415" cy="111" r="2" stroke="#60d060" fill="none"/><path d="M1419,105 L1419,116 L1421.5,113.5 L1424,118 L1425.5,117 L1423,112.5 L1426,112 Z" fill="#ffffff"/>
<text x="1372" y="137" font-size="12" fill="#f2f2f2" text-anchor="start" font-weight="normal" font-style="normal" font-family="Liberation Sans" ></text>
<path d="M1455.5,56 L1455.5,63 M1483.5,56 L1483.5,63 M1457,59.5 L1482,59.5" stroke="#d8d8d8" fill="none"/><path d="M1456,59.5 L1460,57.5 L1460,61.5 Z M1483,59.5 L1479,57.5 L1479,61.5 Z" fill="#d8d8d8"/><rect x="1455" y="66" width="29" height="6" fill="#f5c26b"/><path d="M1458,66 L1458,68 M1461,66 L1461,68 M1464,66 L1464,68 M1467,66 L1467,68 M1470,66 L1470,68 M1473,66 L1473,68 M1476,66 L1476,68 M1479,66 L1479,68" stroke="#8a6a30" stroke-width="0.7"/>
<text x="1446" y="99" font-size="12.5" fill="#f0f0f0" text-anchor="start" font-weight="normal" font-style="normal" font-family="Liberation Sans" textLength="45" lengthAdjust="spacingAndGlyphs" >Measure</text><path d="M1465.0,104.5 L1472.0,104.5 L1468.5,108.5 Z" fill="#f0f0f0"/>
<path d="M1507,58 L1507,69 L1510,66 L1513,70 L1514.5,69 L1512,65 L1515,65 Z" fill="#f0f0f0"/><rect x="1513" y="61" width="9" height="9" fill="#f0f0f0"/><path d="M1515,63.5 L1520,63.5 M1515,66 L1520,66 M1515,68.5 L1520,68.5" stroke="#5ac8fa"/><path d="M1514,52 L1511,57 L1514,57 L1512,61 L1517,55 L1514,55 L1516,52 Z" fill="#f5c26b"/>
<rect x="1507.5" y="77.5" width="14" height="14" stroke="#60d060" stroke-dasharray="1.5,1" fill="none"/><rect x="1509.5" y="80.5" width="7" height="8" fill="#80c890"/><path d="M1514,82 L1514,94 L1516.5,91.5 L1519,96 L1520.5,95 L1518,90.5 L1521,90 Z" fill="#ffffff"/>
<rect x="1509" y="101" width="12" height="16" fill="#d0d0d0"/><rect x="1511" y="103" width="8" height="3" fill="#555"/><g fill="#555"><rect x="1511" y="108" width="2" height="2"/><rect x="1514" y="108" width="2" height="2"/><rect x="1517" y="108" width="2" height="2"/><rect x="1511" y="111" width="2" height="2"/><rect x="1514" y="111" width="2" height="2"/><rect x="1517" y="111" width="2" height="2"/><rect x="1511" y="114" width="2" height="2"/><rect x="1514" y="114" width="2" height="2"/><rect x="1517" y="114" width="2" height="2"/></g>
<rect x="1544" y="55" width="20" height="26" fill="#d2a060"/><rect x="1551" y="52" width="7" height="4" fill="#e8e8e8"/><path d="M1552,62 L1566,62 L1570,66 L1570,84 L1552,84 Z" fill="#dcdcdc"/><path d="M1566,62 L1566,66 L1570,66 Z" fill="#f4f4f4"/>
<text x="1543" y="99" font-size="12.5" fill="#f0f0f0" text-anchor="start" font-weight="normal" font-style="normal" font-family="Liberation Sans" textLength="28" lengthAdjust="spacingAndGlyphs" >Paste</text><path d="M1554.0,104.5 L1561.0,104.5 L1557.5,108.5 Z" fill="#f0f0f0"/>
<rect x="1587" y="53" width="10" height="12" fill="#d0d0d0"/><path d="M1589,56 L1594,56 M1589,59 L1594,59 M1589,62 L1592,62" stroke="#555"/><g stroke="#e0e0e0" fill="none"><circle cx="1596" cy="68" r="1.8"/><circle cx="1601" cy="68" r="1.8"/><path d="M1596,66 L1602,58 M1601,66 L1595,58"/></g>
<rect x="1588" y="77" width="8" height="11" fill="#c8c8c8"/><path d="M1591,80 L1598,80 L1601,83 L1601,93 L1591,93 Z" fill="#d8d8d8"/>
<path d="M1625,56 L1639,56 L1639,68 L1657,68 L1657,80 L1625,80 Z" fill="#dcdcdc"/>
<text x="1629" y="99" font-size="12.5" fill="#f0f0f0" text-anchor="start" font-weight="normal" font-style="normal" font-family="Liberation Sans" textLength="24" lengthAdjust="spacingAndGlyphs" >Base</text><path d="M1638.0,104.5 L1645.0,104.5 L1641.5,108.5 Z" fill="#f0f0f0"/>
<rect x="0" y="144" width="1917" height="29" fill="#363636"/>
<path d="M16,168.5 C20,165.5 22,157.5 24,152.5 Q26,147.5 31,147.5 L137,147.5 Q145,147.5 146,155.5 C146.5,162.5 144,168.5 140,168.5 Z" fill="url(#dtab)" stroke="#2e2e2e" stroke-width="0.8"/>
<path d="M140,168.5 C144,165.5 146,157.5 148,152.5 Q150,147.5 155,147.5 L291,147.5 Q299,147.5 300,155.5 C300.5,162.5 298,168.5 294,168.5 Z" fill="url(#dtab)" stroke="#2e2e2e" stroke-width="0.8"/>
<path d="M294,168.5 C298,165.5 300,157.5 302,152.5 Q304,147.5 309,147.5 L460,147.5 Q468,147.5 469,155.5 C469.5,162.5 467,168.5 463,168.5 Z" fill="url(#dtab)" stroke="#2e2e2e" stroke-width="0.8"/>
<path d="M463,168.5 C467,165.5 469,157.5 471,152.5 Q473,147.5 478,147.5 L710,147.5 Q718,147.5 719,155.5 C719.5,162.5 717,168.5 713,168.5 Z" fill="url(#dtab)" stroke="#2e2e2e" stroke-width="0.8"/>
<path d="M713,168.5 C717,165.5 719,157.5 721,152.5 Q723,147.5 728,147.5 L887,147.5 Q895,147.5 896,155.5 C896.5,162.5 894,168.5 890,168.5 Z" fill="url(#dtab)" stroke="#2e2e2e" stroke-width="0.8"/>
<path d="M890,168.5 C894,165.5 896,157.5 898,152.5 Q900,147.5 905,147.5 L1013,147.5 Q1021,147.5 1022,155.5 C1022.5,162.5 1020,168.5 1016,168.5 Z" fill="url(#dtab)" stroke="#2e2e2e" stroke-width="0.8"/>
<path d="M1016,168.5 C1020,165.5 1022,157.5 1024,152.5 Q1026,147.5 1031,147.5 L1245,147.5 Q1253,147.5 1254,155.5 C1254.5,162.5 1252,168.5 1248,168.5 Z" fill="url(#dtab)" stroke="#2e2e2e" stroke-width="0.8"/>
<path d="M1248,168.5 C1252,165.5 1254,157.5 1256,152.5 Q1258,147.5 1263,147.5 L1369,147.5 Q1377,147.5 1378,155.5 C1378.5,162.5 1376,168.5 1372,168.5 Z" fill="url(#dtab)" stroke="#2e2e2e" stroke-width="0.8"/>
<path d="M1372,168.5 C1376,165.5 1378,157.5 1380,152.5 Q1382,147.5 1387,147.5 L1593,147.5 Q1601,147.5 1602,155.5 C1602.5,162.5 1600,168.5 1596,168.5 Z" fill="url(#dtab)" stroke="#2e2e2e" stroke-width="0.8"/>
<rect x="0" y="168" width="1917" height="5" fill="#565656"/>
<text x="32" y="163" font-size="12.5" fill="#bdbdbd" text-anchor="start" font-weight="normal" font-style="normal" font-family="Liberation Sans" textLength="24" lengthAdjust="spacingAndGlyphs" >Start</text>
<text x="155" y="163" font-size="12.5" fill="#bdbdbd" text-anchor="start" font-weight="normal" font-style="normal" font-family="Liberation Sans" textLength="116" lengthAdjust="spacingAndGlyphs" >60M (INDOOR)_ph1b*</text>
<path d="M282,155 L288,161 M288,155 L282,161" stroke="#8a8a8a" stroke-width="1.6"/>
<text x="311" y="163" font-size="12.5" fill="#bdbdbd" text-anchor="start" font-weight="normal" font-style="normal" font-family="Liberation Sans" textLength="128" lengthAdjust="spacingAndGlyphs" >60m INDOOR 3x4_ph1a*</text>
<path d="M449,155 L455,161 M455,155 L449,161" stroke="#8a8a8a" stroke-width="1.6"/>
<text x="479" y="163" font-size="12.5" fill="#bdbdbd" text-anchor="start" font-weight="normal" font-style="normal" font-family="Liberation Sans" textLength="209" lengthAdjust="spacingAndGlyphs" >00---HVAC-00 LEGEND AND SYMBOLS*</text>
<path d="M698,155 L704,161 M704,155 L698,161" stroke="#8a8a8a" stroke-width="1.6"/>
<text x="728" y="163" font-size="12.5" fill="#bdbdbd" text-anchor="start" font-weight="normal" font-style="normal" font-family="Liberation Sans" textLength="140" lengthAdjust="spacingAndGlyphs" >01---HVAC -01 SITE PLAN*</text>
<path d="M878,155 L884,161 M884,155 L878,161" stroke="#8a8a8a" stroke-width="1.6"/>
<text x="907" y="163" font-size="12.5" fill="#bdbdbd" text-anchor="start" font-weight="normal" font-style="normal" font-family="Liberation Sans" textLength="15" lengthAdjust="spacingAndGlyphs" >1st</text>
<path d="M1001,155 L1007,161 M1007,155 L1001,161" stroke="#8a8a8a" stroke-width="1.6"/>
<text x="1030" y="163" font-size="12.5" fill="#bdbdbd" text-anchor="start" font-weight="normal" font-style="normal" font-family="Liberation Sans" textLength="197" lengthAdjust="spacingAndGlyphs" >02---HVAC-02 TO -014 FLOOR PLAN*</text>
<path d="M1237,155 L1243,161 M1243,155 L1237,161" stroke="#8a8a8a" stroke-width="1.6"/>
<text x="1267" y="163" font-size="12.5" fill="#bdbdbd" text-anchor="start" font-weight="normal" font-style="normal" font-family="Liberation Sans" textLength="20" lengthAdjust="spacingAndGlyphs" >2nd</text>
<path d="M1360,155 L1366,161 M1366,155 L1360,161" stroke="#8a8a8a" stroke-width="1.6"/>
<text x="1390" y="163" font-size="12.5" fill="#bdbdbd" text-anchor="start" font-weight="normal" font-style="normal" font-family="Liberation Sans" textLength="183" lengthAdjust="spacingAndGlyphs" >03---HVAC 15 TO 25 FLOOR PLAN*</text>
<path d="M1583,155 L1589,161 M1589,155 L1583,161" stroke="#8a8a8a" stroke-width="1.6"/>
<path d="M1596,170 C1600,167 1602,157.5 1604,152.5 Q1606,147.5 1611,147.5 L1833,147.5 Q1841,147.5 1842,155.5 C1842.5,162.5 1840,170 1836,170 Z" fill="url(#dtaba)" stroke="#3a3a3a" stroke-width="0.8"/>
<text x="1613" y="163" font-size="12.5" fill="#f4f4f4" text-anchor="start" font-weight="normal" font-style="normal" font-family="Liberation Sans" textLength="195" lengthAdjust="spacingAndGlyphs" >04---HVAC-26 TO 30 RISER DIAGRAM</text>
<path d="M1818,155 L1824,161 M1824,155 L1818,161" stroke="#3e3e3e" stroke-width="1.6"/>
<path d="M1842,168 C1845,165 1846,158 1847,155 Q1849,152 1854,152 L1860,152 Q1867,152 1867,159 L1867,168 Z" fill="#555555" stroke="#2c2c2c" stroke-width="0.8"/>
<path d="M1851.5,159.5 L1860.5,159.5 M1856,155 L1856,164" stroke="#d8d8d8" stroke-width="1.8"/>
<path d="M1901,151 L1905,155 L1909,151 M1901,156 L1905,160 L1909,156" stroke="#d8d8d8" stroke-width="1.5" fill="none"/>
<rect x="0" y="173" width="1917" height="830" fill="#898989"/>
<defs><linearGradient id="shl" x1="0" y1="0" x2="1" y2="0"><stop offset="0" stop-color="#898989"/><stop offset="1" stop-color="#7c7c7c"/></linearGradient><linearGradient id="shr" x1="0" y1="0" x2="1" y2="0"><stop offset="0" stop-color="#7c7c7c"/><stop offset="1" stop-color="#898989"/></linearGradient></defs>
<rect x="206" y="173" width="9" height="830" fill="url(#shl)"/>
<rect x="1448" y="173" width="9" height="830" fill="url(#shr)"/>
<rect x="215" y="173" width="1233" height="830" fill="#ffffff"/>
<rect x="1912" y="173" width="5" height="830" fill="#d6e6f6"/>
<g stroke="#3a3a3a" stroke-width="0.8" fill="#f0f0f0"><rect x="1850.5" y="188.5" width="12" height="4.5"/><rect x="1873" y="182" width="9.5" height="10"/><rect x="1870.5" y="184.5" width="9.5" height="10"/></g><rect x="1873.5" y="187.5" width="3" height="3" fill="#555"/>
<path d="M1891,183.5 L1900,192.5 M1900,183.5 L1891,192.5" stroke="#3a3a3a" stroke-width="3.2"/><path d="M1891,183.5 L1900,192.5 M1900,183.5 L1891,192.5" stroke="#f4f4f4" stroke-width="1.8"/>
<rect x="1875.5" y="433.5" width="32.5" height="133" rx="4" fill="#9f9f9f" stroke="#707070" stroke-width="1.2"/>
<circle cx="1902" cy="439" r="2.5" fill="none" stroke="#808080"/><path d="M1877,444.5 L1906,444.5 M1879,480.5 L1904,480.5" stroke="#8a8a8a"/>
<g stroke="#8d8d8d" stroke-width="1.2" fill="none"><path d="M1900,460 L1900,457 Q1900,453 1895,453 L1888,453 Q1880,453 1880,460 L1880,464 Q1880,470 1886,470"/><circle cx="1888" cy="461.5" r="4.5"/><path d="M1884,467 L1882,470"/></g>
<text x="1892" y="471" font-size="8" fill="#8d8d8d" font-family="Liberation Sans" font-weight="bold">2D</text>
<path d="M1884,496 Q1880,492 1883,491 L1887,494 L1887,484 Q1889,482 1890,484 L1890,491 L1890,482 Q1892,480 1893,482 L1893,491 L1893,483 Q1895,481 1896,483 L1896,492 L1897,486 Q1899,485 1899,487 L1898,496 Q1896,505 1890,506 Q1886,505 1884,496 Z" fill="none" stroke="#8d8d8d" stroke-width="1.1"/>
<g stroke="#8d8d8d" stroke-width="1.1" fill="none"><path d="M1880,513 L1896,529 M1896,513 L1880,529 M1880,513 L1884,513 M1880,513 L1880,517 M1896,513 L1892,513 M1896,513 L1896,517 M1880,529 L1880,525 M1880,529 L1884,529"/><circle cx="1897" cy="532" r="4"/><path d="M1900,535 L1904,539" stroke-width="2"/></g>
<path d="M1889.5,543.5 L1894.5,543.5 L1892,546.5 Z" fill="#8a8a8a"/>
<circle cx="1901" cy="561" r="2.5" fill="none" stroke="#808080"/>
<text x="1599" y="957" font-size="18.5" fill="#9c9c9c" text-anchor="start" font-weight="normal" font-style="normal" font-family="Liberation Sans" textLength="157" lengthAdjust="spacingAndGlyphs" >Activate Windows</text>
<text x="1599" y="978" font-size="13" fill="#9c9c9c" text-anchor="start" font-weight="normal" font-style="normal" font-family="Liberation Sans" textLength="237" lengthAdjust="spacingAndGlyphs" >Go to Settings to activate Windows.</text>
<g stroke="#3040ff" stroke-width="1.4" fill="none"><path d="M16,900.5 L16,986 L66,986 Z"/><path d="M16,978.5 L24.5,978.5 L24.5,986"/><path d="M18.5,926 L24.5,932 L31.5,925.5 M24.5,932 L24.5,939"/><path d="M44.5,972.5 L57,984.5 M57,972.5 L44.5,984.5"/></g>
<rect x="221.5" y="176.5" width="1220" height="823" fill="none" stroke="#8a8a8a" stroke-width="1.1" stroke-dasharray="3.8,2.1"/>
<path d="M248,178.3 L1414.5,178.3 M248,178.3 L248,999.5 L1414.5,999.5 M1414.5,178.3 L1414.5,999.5" stroke="#000" stroke-width="2" fill="none"/>
<g stroke="#3c3c3c" stroke-width="1" fill="none"><path d="M251.5,181.5 L1190.5,181.5 M255.5,184.5 L1187.5,184.5"/><path d="M251.5,181.5 L251.5,995.5 M255.5,184.5 L255.5,992.5"/><path d="M251.5,995.5 L1190.5,995.5 M255.5,992.5 L1187.5,992.5"/><path d="M1190.5,181.5 L1190.5,995.5 M1187.5,184.5 L1187.5,992.5"/></g>
<path d="M1194.5,178 L1194.5,999.5" stroke="#000" stroke-width="2"/>
<path d="M288.2,181.5 L288.2,184.5 M288.2,992.5 L288.2,995.5 M302.9,181.5 L302.9,184.5 M302.9,992.5 L302.9,995.5 M317.6,181.5 L317.6,184.5 M317.6,992.5 L317.6,995.5 M332.3,181.5 L332.3,184.5 M332.3,992.5 L332.3,995.5 M347.0,181.5 L347.0,184.5 M347.0,992.5 L347.0,995.5 M361.7,181.5 L361.7,184.5 M361.7,992.5 L361.7,995.5 M376.4,181.5 L376.4,184.5 M376.4,992.5 L376.4,995.5 M391.1,181.5 L391.1,184.5 M391.1,992.5 L391.1,995.5 M405.8,181.5 L405.8,184.5 M405.8,992.5 L405.8,995.5 M420.5,181.5 L420.5,184.5 M420.5,992.5 L420.5,995.5 M435.2,181.5 L435.2,184.5 M435.2,992.5 L435.2,995.5 M449.9,181.5 L449.9,184.5 M449.9,992.5 L449.9,995.5 M464.6,181.5 L464.6,184.5 M464.6,992.5 L464.6,995.5 M479.3,181.5 L479.3,184.5 M479.3,992.5 L479.3,995.5 M494.0,181.5 L494.0,184.5 M494.0,992.5 L494.0,995.5 M508.7,181.5 L508.7,184.5 M508.7,992.5 L508.7,995.5 M523.4,181.5 L523.4,184.5 M523.4,992.5 L523.4,995.5 M538.1,181.5 L538.1,184.5 M538.1,992.5 L538.1,995.5 M552.8,181.5 L552.8,184.5 M552.8,992.5 L552.8,995.5 M567.5,181.5 L567.5,184.5 M567.5,992.5 L567.5,995.5 M582.2,181.5 L582.2,184.5 M582.2,992.5 L582.2,995.5 M596.9,181.5 L596.9,184.5 M596.9,992.5 L596.9,995.5 M611.6,181.5 L611.6,184.5 M611.6,992.5 L611.6,995.5 M626.3,181.5 L626.3,184.5 M626.3,992.5 L626.3,995.5 M641.0,181.5 L641.0,184.5 M641.0,992.5 L641.0,995.5 M655.7,181.5 L655.7,184.5 M655.7,992.5 L655.7,995.5 M670.4,181.5 L670.4,184.5 M670.4,992.5 L670.4,995.5 M685.1,181.5 L685.1,184.5 M685.1,992.5 L685.1,995.5 M699.8,181.5 L699.8,184.5 M699.8,992.5 L699.8,995.5 M714.5,181.5 L714.5,184.5 M714.5,992.5 L714.5,995.5 M729.2,181.5 L729.2,184.5 M729.2,992.5 L729.2,995.5 M743.9,181.5 L743.9,184.5 M743.9,992.5 L743.9,995.5 M758.6,181.5 L758.6,184.5 M758.6,992.5 L758.6,995.5 M773.3,181.5 L773.3,184.5 M773.3,992.5 L773.3,995.5 M788.0,181.5 L788.0,184.5 M788.0,992.5 L788.0,995.5 M802.7,181.5 L802.7,184.5 M802.7,992.5 L802.7,995.5 M817.4,181.5 L817.4,184.5 M817.4,992.5 L817.4,995.5 M832.1,181.5 L832.1,184.5 M832.1,992.5 L832.1,995.5 M846.8,181.5 L846.8,184.5 M846.8,992.5 L846.8,995.5 M861.5,181.5 L861.5,184.5 M861.5,992.5 L861.5,995.5 M876.2,181.5 L876.2,184.5 M876.2,992.5 L876.2,995.5 M890.9,181.5 L890.9,184.5 M890.9,992.5 L890.9,995.5 M905.6,181.5 L905.6,184.5 M905.6,992.5 L905.6,995.5 M920.3,181.5 L920.3,184.5 M920.3,992.5 L920.3,995.5 M935.0,181.5 L935.0,184.5 M935.0,992.5 L935.0,995.5 M949.7,181.5 L949.7,184.5 M949.7,992.5 L949.7,995.5 M964.4,181.5 L964.4,184.5 M964.4,992.5 L964.4,995.5 M979.1,181.5 L979.1,184.5 M979.1,992.5 L979.1,995.5 M993.8,181.5 L993.8,184.5 M993.8,992.5 L993.8,995.5 M1008.5,181.5 L1008.5,184.5 M1008.5,992.5 L1008.5,995.5 M1023.2,181.5 L1023.2,184.5 M1023.2,992.5 L1023.2,995.5 M1037.9,181.5 L1037.9,184.5 M1037.9,992.5 L1037.9,995.5 M1052.6,181.5 L1052.6,184.5 M1052.6,992.5 L1052.6,995.5 M1067.3,181.5 L1067.3,184.5 M1067.3,992.5 L1067.3,995.5 M1082.0,181.5 L1082.0,184.5 M1082.0,992.5 L1082.0,995.5 M1096.7,181.5 L1096.7,184.5 M1096.7,992.5 L1096.7,995.5 M1111.4,181.5 L1111.4,184.5 M1111.4,992.5 L1111.4,995.5 M1126.1,181.5 L1126.1,184.5 M1126.1,992.5 L1126.1,995.5 M1140.8,181.5 L1140.8,184.5 M1140.8,992.5 L1140.8,995.5 M1155.5,181.5 L1155.5,184.5 M1155.5,992.5 L1155.5,995.5 M1170.2,181.5 L1170.2,184.5 M1170.2,992.5 L1170.2,995.5 M1184.9,181.5 L1184.9,184.5 M1184.9,992.5 L1184.9,995.5 M251.5,214.1 L255.5,214.1 M1187.5,214.1 L1190.5,214.1 M251.5,228.8 L255.5,228.8 M1187.5,228.8 L1190.5,228.8 M251.5,243.5 L255.5,243.5 M1187.5,243.5 L1190.5,243.5 M251.5,258.2 L255.5,258.2 M1187.5,258.2 L1190.5,258.2 M251.5,272.9 L255.5,272.9 M1187.5,272.9 L1190.5,272.9 M251.5,287.6 L255.5,287.6 M1187.5,287.6 L1190.5,287.6 M251.5,302.3 L255.5,302.3 M1187.5,302.3 L1190.5,302.3 M251.5,317.0 L255.5,317.0 M1187.5,317.0 L1190.5,317.0 M251.5,331.7 L255.5,331.7 M1187.5,331.7 L1190.5,331.7 M251.5,346.4 L255.5,346.4 M1187.5,346.4 L1190.5,346.4 M251.5,361.1 L255.5,361.1 M1187.5,361.1 L1190.5,361.1 M251.5,375.8 L255.5,375.8 M1187.5,375.8 L1190.5,375.8 M251.5,390.5 L255.5,390.5 M1187.5,390.5 L1190.5,390.5 M251.5,405.2 L255.5,405.2 M1187.5,405.2 L1190.5,405.2 M251.5,419.9 L255.5,419.9 M1187.5,419.9 L1190.5,419.9 M251.5,434.6 L255.5,434.6 M1187.5,434.6 L1190.5,434.6 M251.5,449.3 L255.5,449.3 M1187.5,449.3 L1190.5,449.3 M251.5,464.0 L255.5,464.0 M1187.5,464.0 L1190.5,464.0 M251.5,478.7 L255.5,478.7 M1187.5,478.7 L1190.5,478.7 M251.5,493.4 L255.5,493.4 M1187.5,493.4 L1190.5,493.4 M251.5,508.1 L255.5,508.1 M1187.5,508.1 L1190.5,508.1 M251.5,522.8 L255.5,522.8 M1187.5,522.8 L1190.5,522.8 M251.5,537.5 L255.5,537.5 M1187.5,537.5 L1190.5,537.5 M251.5,552.2 L255.5,552.2 M1187.5,552.2 L1190.5,552.2 M251.5,566.9 L255.5,566.9 M1187.5,566.9 L1190.5,566.9 M251.5,581.6 L255.5,581.6 M1187.5,581.6 L1190.5,581.6 M251.5,596.3 L255.5,596.3 M1187.5,596.3 L1190.5,596.3 M251.5,611.0 L255.5,611.0 M1187.5,611.0 L1190.5,611.0 M251.5,625.7 L255.5,625.7 M1187.5,625.7 L1190.5,625.7 M251.5,640.4 L255.5,640.4 M1187.5,640.4 L1190.5,640.4 M251.5,655.1 L255.5,655.1 M1187.5,655.1 L1190.5,655.1 M251.5,669.8 L255.5,669.8 M1187.5,669.8 L1190.5,669.8 M251.5,684.5 L255.5,684.5 M1187.5,684.5 L1190.5,684.5 M251.5,699.2 L255.5,699.2 M1187.5,699.2 L1190.5,699.2 M251.5,713.9 L255.5,713.9 M1187.5,713.9 L1190.5,713.9 M251.5,728.6 L255.5,728.6 M1187.5,728.6 L1190.5,728.6 M251.5,743.3 L255.5,743.3 M1187.5,743.3 L1190.5,743.3 M251.5,758.0 L255.5,758.0 M1187.5,758.0 L1190.5,758.0 M251.5,772.7 L255.5,772.7 M1187.5,772.7 L1190.5,772.7 M251.5,787.4 L255.5,787.4 M1187.5,787.4 L1190.5,787.4 M251.5,802.1 L255.5,802.1 M1187.5,802.1 L1190.5,802.1 M251.5,816.8 L255.5,816.8 M1187.5,816.8 L1190.5,816.8 M251.5,831.5 L255.5,831.5 M1187.5,831.5 L1190.5,831.5 M251.5,846.2 L255.5,846.2 M1187.5,846.2 L1190.5,846.2 M251.5,860.9 L255.5,860.9 M1187.5,860.9 L1190.5,860.9 M251.5,875.6 L255.5,875.6 M1187.5,875.6 L1190.5,875.6 M251.5,890.3 L255.5,890.3 M1187.5,890.3 L1190.5,890.3 M251.5,905.0 L255.5,905.0 M1187.5,905.0 L1190.5,905.0 M251.5,919.7 L255.5,919.7 M1187.5,919.7 L1190.5,919.7 M251.5,934.4 L255.5,934.4 M1187.5,934.4 L1190.5,934.4 M251.5,949.1 L255.5,949.1 M1187.5,949.1 L1190.5,949.1 M251.5,963.8 L255.5,963.8 M1187.5,963.8 L1190.5,963.8 M251.5,978.5 L255.5,978.5 M1187.5,978.5 L1190.5,978.5" stroke="#222" stroke-width="1.2"/>
<path d="M259,188.5 L1183.5,188.5 L1183.5,988.5 L259,988.5 Z" stroke="#ff7896" stroke-width="1.3" fill="none"/>
<g stroke="#ff80a0" stroke-width="1.2"><path d="M255.5,189 L263.5,189 M259.5,185 L259.5,193 M256.5,186 L262.5,192 M256.5,192 L262.5,186"/></g>
<g stroke="#ff80a0" stroke-width="1.2"><path d="M1179,189 L1187,189 M1183,185 L1183,193 M1180,186 L1186,192 M1180,192 L1186,186"/></g>
<g stroke="#ff80a0" stroke-width="1.2"><path d="M255.5,988.5 L263.5,988.5 M259.5,984.5 L259.5,992.5 M256.5,985.5 L262.5,991.5 M256.5,991.5 L262.5,985.5"/></g>
<g stroke="#ff80a0" stroke-width="1.2"><path d="M1179,988.5 L1187,988.5 M1183,984.5 L1183,992.5 M1180,985.5 L1186,991.5 M1180,991.5 L1186,985.5"/></g>
<circle cx="253" cy="182.5" r="4.3" fill="#1020ff" stroke="#222" stroke-width="0.8" stroke-dasharray="1,1"/><circle cx="252.5" cy="181.5" r="1.8" fill="#b8c0ff"/>
<circle cx="1189" cy="182.5" r="4.3" fill="#1020ff" stroke="#222" stroke-width="0.8" stroke-dasharray="1,1"/><circle cx="1188.5" cy="181.5" r="1.8" fill="#b8c0ff"/>
<circle cx="253" cy="994.5" r="4.3" fill="#1020ff" stroke="#222" stroke-width="0.8" stroke-dasharray="1,1"/><circle cx="252.5" cy="993.5" r="1.8" fill="#b8c0ff"/>
<path d="M690.6,196 L690.6,928" stroke="#1878b8" stroke-width="1.6" stroke-dasharray="9,1.5"/>
<path d="M695.9,196 L695.9,925" stroke="#16c0ff" stroke-width="1.9"/>
<circle cx="690.3" cy="193.5" r="1.1" fill="#ff2020"/><circle cx="695.9" cy="193.5" r="1.1" fill="#ff2020"/>
<g stroke="#2020ff" stroke-width="1"><path d="M688.5,196 L692,200 M692,196 L688.5,200 M694,196 L697.5,200 M697.5,196 L694,200"/></g>
<text x="679" y="200" font-size="5" fill="#111" text-anchor="start" font-weight="bold" font-style="normal" font-family="Liberation Sans" textLength="8" lengthAdjust="spacingAndGlyphs" stroke="#111" stroke-width="0.3">AAV</text>
<text x="699" y="200" font-size="5" fill="#111" text-anchor="start" font-weight="bold" font-style="normal" font-family="Liberation Sans" textLength="8" lengthAdjust="spacingAndGlyphs" stroke="#111" stroke-width="0.3">AAV</text>
<polygon points="696.80,210.20 694.90,213.49 691.10,213.49 689.20,210.20 691.10,206.91 694.90,206.91" fill="#ffffff" stroke="#3e3430" stroke-width="1.1"/><path d="M677,214.2 L688,214.2 L690.5,210.2" stroke="#4e382c" stroke-width="0.9" fill="none"/><text x="678.5" y="213.2" font-size="4.8" fill="#111" text-anchor="start" font-weight="bold" font-style="normal" font-family="Liberation Sans" textLength="8" lengthAdjust="spacingAndGlyphs" stroke="#111" stroke-width="0.3">ø6"</text>
<rect x="689.3" y="220.3" width="2.2" height="5" fill="#f4f400"/><rect x="694.9" y="220.3" width="2.2" height="5" fill="#f4f400"/>
<path d="M690.3,231.5 L727,231.5" stroke="#1878b8" stroke-width="1.4" stroke-dasharray="5,1.5"/>
<path d="M696,236.0 L727,236.0" stroke="#16c0ff" stroke-width="1.5"/>
<polygon points="704.00,233.80 702.30,236.74 698.90,236.74 697.20,233.80 698.90,230.86 702.30,230.86" fill="#ffffff" stroke="#3e3430" stroke-width="1.1"/>
<path d="M704.5,237.4 L710.3,228.4 L714,233.3 L716,237.4 Z" fill="#0000ff"/><circle cx="713.6" cy="235.0" r="2.7" fill="#0000ff"/><path d="M707.5,236.3 L710,232.8 L711.5,236.3 Z" fill="#ffffff" opacity="0.5"/>
<rect x="719.5" y="230.20000000000002" width="4.5" height="2.6" fill="#f4f400"/><rect x="719.5" y="234.8" width="4.5" height="2.6" fill="#f4f400"/>
<rect x="731.5" y="231.0" width="25.5" height="5.6" fill="#ffffff" stroke="#4e382c" stroke-width="0.9"/>
<text x="733.5" y="235.70000000000002" font-size="5.2" fill="#111" text-anchor="start" font-weight="bold" font-style="normal" font-family="Liberation Sans" textLength="21.5" lengthAdjust="spacingAndGlyphs" stroke="#111" stroke-width="0.35">XXX GPM</text>
<path d="M702.5,236.8 L706,243.60000000000002 L716,243.60000000000002" stroke="#4e382c" stroke-width="0.9" fill="none"/>
<text x="707" y="242.60000000000002" font-size="4.8" fill="#111" text-anchor="start" font-weight="bold" font-style="normal" font-family="Liberation Sans" textLength="8" lengthAdjust="spacingAndGlyphs" stroke="#111" stroke-width="0.3">ø6"</text>
<polygon points="696.80,242.40 694.90,245.69 691.10,245.69 689.20,242.40 691.10,239.11 694.90,239.11" fill="#ffffff" stroke="#3e3430" stroke-width="1.1"/><path d="M677,246.4 L688,246.4 L690.5,242.4" stroke="#4e382c" stroke-width="0.9" fill="none"/><text x="678.5" y="245.4" font-size="4.8" fill="#111" text-anchor="start" font-weight="bold" font-style="normal" font-family="Liberation Sans" textLength="8" lengthAdjust="spacingAndGlyphs" stroke="#111" stroke-width="0.3">ø6"</text>
<rect x="689.3" y="246.0" width="2.2" height="5" fill="#f4f400"/><rect x="694.9" y="246.0" width="2.2" height="5" fill="#f4f400"/>
<path d="M690.3,257.2 L727,257.2" stroke="#1878b8" stroke-width="1.4" stroke-dasharray="5,1.5"/>
<path d="M696,261.7 L727,261.7" stroke="#16c0ff" stroke-width="1.5"/>
<polygon points="704.00,259.50 702.30,262.44 698.90,262.44 697.20,259.50 698.90,256.56 702.30,256.56" fill="#ffffff" stroke="#3e3430" stroke-width="1.1"/>
<path d="M704.5,263.1 L710.3,254.1 L714,259.0 L716,263.1 Z" fill="#0000ff"/><circle cx="713.6" cy="260.7" r="2.7" fill="#0000ff"/><path d="M707.5,262.0 L710,258.5 L711.5,262.0 Z" fill="#ffffff" opacity="0.5"/>
<rect x="719.5" y="255.9" width="4.5" height="2.6" fill="#f4f400"/><rect x="719.5" y="260.5" width="4.5" height="2.6" fill="#f4f400"/>
<rect x="731.5" y="256.7" width="25.5" height="5.6" fill="#ffffff" stroke="#4e382c" stroke-width="0.9"/>
<text x="733.5" y="261.4" font-size="5.2" fill="#111" text-anchor="start" font-weight="bold" font-style="normal" font-family="Liberation Sans" textLength="21.5" lengthAdjust="spacingAndGlyphs" stroke="#111" stroke-width="0.35">30 GPM</text>
<path d="M702.5,262.5 L706,269.3 L720,269.3" stroke="#4e382c" stroke-width="0.9" fill="none"/>
<text x="707" y="268.3" font-size="4.8" fill="#111" text-anchor="start" font-weight="bold" font-style="normal" font-family="Liberation Sans" textLength="12" lengthAdjust="spacingAndGlyphs" stroke="#111" stroke-width="0.3">ø2/2"</text>
<polygon points="696.80,268.10 694.90,271.39 691.10,271.39 689.20,268.10 691.10,264.81 694.90,264.81" fill="#ffffff" stroke="#3e3430" stroke-width="1.1"/><path d="M677,272.1 L688,272.1 L690.5,268.1" stroke="#4e382c" stroke-width="0.9" fill="none"/><text x="678.5" y="271.1" font-size="4.8" fill="#111" text-anchor="start" font-weight="bold" font-style="normal" font-family="Liberation Sans" textLength="8" lengthAdjust="spacingAndGlyphs" stroke="#111" stroke-width="0.3">ø6"</text>
<rect x="689.3" y="272.1" width="2.2" height="5" fill="#f4f400"/><rect x="694.9" y="272.1" width="2.2" height="5" fill="#f4f400"/>
<path d="M690.3,283.3 L727,283.3" stroke="#1878b8" stroke-width="1.4" stroke-dasharray="5,1.5"/>
<path d="M696,287.8 L727,287.8" stroke="#16c0ff" stroke-width="1.5"/>
<polygon points="704.00,285.60 702.30,288.54 698.90,288.54 697.20,285.60 698.90,282.66 702.30,282.66" fill="#ffffff" stroke="#3e3430" stroke-width="1.1"/>
<path d="M704.5,289.20000000000005 L710.3,280.20000000000005 L714,285.1 L716,289.20000000000005 Z" fill="#0000ff"/><circle cx="713.6" cy="286.8" r="2.7" fill="#0000ff"/><path d="M707.5,288.1 L710,284.6 L711.5,288.1 Z" fill="#ffffff" opacity="0.5"/>
<rect x="719.5" y="282.0" width="4.5" height="2.6" fill="#f4f400"/><rect x="719.5" y="286.6" width="4.5" height="2.6" fill="#f4f400"/>
<rect x="731.5" y="282.8" width="25.5" height="5.6" fill="#ffffff" stroke="#4e382c" stroke-width="0.9"/>
<text x="733.5" y="287.5" font-size="5.2" fill="#111" text-anchor="start" font-weight="bold" font-style="normal" font-family="Liberation Sans" textLength="21.5" lengthAdjust="spacingAndGlyphs" stroke="#111" stroke-width="0.35">4 GPM</text>
<path d="M702.5,288.6 L706,295.40000000000003 L716,295.40000000000003" stroke="#4e382c" stroke-width="0.9" fill="none"/>
<text x="707" y="294.40000000000003" font-size="4.8" fill="#111" text-anchor="start" font-weight="bold" font-style="normal" font-family="Liberation Sans" textLength="8" lengthAdjust="spacingAndGlyphs" stroke="#111" stroke-width="0.3">ø6"</text>
<polygon points="696.80,294.20 694.90,297.49 691.10,297.49 689.20,294.20 691.10,290.91 694.90,290.91" fill="#ffffff" stroke="#3e3430" stroke-width="1.1"/><path d="M677,298.20000000000005 L688,298.20000000000005 L690.5,294.20000000000005" stroke="#4e382c" stroke-width="0.9" fill="none"/><text x="678.5" y="297.20000000000005" font-size="4.8" fill="#111" text-anchor="start" font-weight="bold" font-style="normal" font-family="Liberation Sans" textLength="8" lengthAdjust="spacingAndGlyphs" stroke="#111" stroke-width="0.3">ø6"</text>
<rect x="689.3" y="297.8" width="2.2" height="5" fill="#f4f400"/><rect x="694.9" y="297.8" width="2.2" height="5" fill="#f4f400"/>
<path d="M690.3,309.0 L727,309.0" stroke="#1878b8" stroke-width="1.4" stroke-dasharray="5,1.5"/>
<path d="M696,313.5 L727,313.5" stroke="#16c0ff" stroke-width="1.5"/>
<polygon points="704.00,311.30 702.30,314.24 698.90,314.24 697.20,311.30 698.90,308.36 702.30,308.36" fill="#ffffff" stroke="#3e3430" stroke-width="1.1"/>
<path d="M704.5,314.90000000000003 L710.3,305.90000000000003 L714,310.8 L716,314.90000000000003 Z" fill="#0000ff"/><circle cx="713.6" cy="312.5" r="2.7" fill="#0000ff"/><path d="M707.5,313.8 L710,310.3 L711.5,313.8 Z" fill="#ffffff" opacity="0.5"/>
<rect x="719.5" y="307.7" width="4.5" height="2.6" fill="#f4f400"/><rect x="719.5" y="312.3" width="4.5" height="2.6" fill="#f4f400"/>
<rect x="731.5" y="308.5" width="25.5" height="5.6" fill="#ffffff" stroke="#4e382c" stroke-width="0.9"/>
<text x="733.5" y="313.2" font-size="5.2" fill="#111" text-anchor="start" font-weight="bold" font-style="normal" font-family="Liberation Sans" textLength="21.5" lengthAdjust="spacingAndGlyphs" stroke="#111" stroke-width="0.35">XX.X GPM</text>
<path d="M702.5,314.3 L706,321.1 L716,321.1" stroke="#4e382c" stroke-width="0.9" fill="none"/>
<text x="707" y="320.1" font-size="4.8" fill="#111" text-anchor="start" font-weight="bold" font-style="normal" font-family="Liberation Sans" textLength="8" lengthAdjust="spacingAndGlyphs" stroke="#111" stroke-width="0.3">ø6"</text>
<polygon points="696.80,319.90 694.90,323.19 691.10,323.19 689.20,319.90 691.10,316.61 694.90,316.61" fill="#ffffff" stroke="#3e3430" stroke-width="1.1"/><path d="M677,323.90000000000003 L688,323.90000000000003 L690.5,319.90000000000003" stroke="#4e382c" stroke-width="0.9" fill="none"/><text x="678.5" y="322.90000000000003" font-size="4.8" fill="#111" text-anchor="start" font-weight="bold" font-style="normal" font-family="Liberation Sans" textLength="8" lengthAdjust="spacingAndGlyphs" stroke="#111" stroke-width="0.3">ø6"</text>
<rect x="689.3" y="328.9" width="2.2" height="5" fill="#f4f400"/><rect x="694.9" y="328.9" width="2.2" height="5" fill="#f4f400"/>
<path d="M690.3,340.09999999999997 L727,340.09999999999997" stroke="#1878b8" stroke-width="1.4" stroke-dasharray="5,1.5"/>
<path d="M696,344.59999999999997 L727,344.59999999999997" stroke="#16c0ff" stroke-width="1.5"/>
<polygon points="704.00,342.40 702.30,345.34 698.90,345.34 697.20,342.40 698.90,339.46 702.30,339.46" fill="#ffffff" stroke="#3e3430" stroke-width="1.1"/>
<path d="M704.5,346.0 L710.3,337.0 L714,341.9 L716,346.0 Z" fill="#0000ff"/><circle cx="713.6" cy="343.59999999999997" r="2.7" fill="#0000ff"/><path d="M707.5,344.9 L710,341.4 L711.5,344.9 Z" fill="#ffffff" opacity="0.5"/>
<rect x="719.5" y="338.79999999999995" width="4.5" height="2.6" fill="#f4f400"/><rect x="719.5" y="343.4" width="4.5" height="2.6" fill="#f4f400"/>
<rect x="731.5" y="339.59999999999997" width="25.5" height="5.6" fill="#ffffff" stroke="#4e382c" stroke-width="0.9"/>
<text x="733.5" y="344.29999999999995" font-size="5.2" fill="#111" text-anchor="start" font-weight="bold" font-style="normal" font-family="Liberation Sans" textLength="21.5" lengthAdjust="spacingAndGlyphs" stroke="#111" stroke-width="0.35">XX.X GPM</text>
<path d="M702.5,345.4 L706,352.2 L716,352.2" stroke="#4e382c" stroke-width="0.9" fill="none"/>
<text x="707" y="351.2" font-size="4.8" fill="#111" text-anchor="start" font-weight="bold" font-style="normal" font-family="Liberation Sans" textLength="8" lengthAdjust="spacingAndGlyphs" stroke="#111" stroke-width="0.3">ø6"</text>
<polygon points="696.80,351.00 694.90,354.29 691.10,354.29 689.20,351.00 691.10,347.71 694.90,347.71" fill="#ffffff" stroke="#3e3430" stroke-width="1.1"/><path d="M677,355.0 L688,355.0 L690.5,351.0" stroke="#4e382c" stroke-width="0.9" fill="none"/><text x="678.5" y="354.0" font-size="4.8" fill="#111" text-anchor="start" font-weight="bold" font-style="normal" font-family="Liberation Sans" textLength="8" lengthAdjust="spacingAndGlyphs" stroke="#111" stroke-width="0.3">ø6"</text>
<rect x="689.3" y="360.2" width="2.2" height="5" fill="#f4f400"/><rect x="694.9" y="360.2" width="2.2" height="5" fill="#f4f400"/>
<path d="M690.3,371.4 L727,371.4" stroke="#1878b8" stroke-width="1.4" stroke-dasharray="5,1.5"/>
<path d="M696,375.9 L727,375.9" stroke="#16c0ff" stroke-width="1.5"/>
<polygon points="704.00,373.70 702.30,376.64 698.90,376.64 697.20,373.70 698.90,370.76 702.30,370.76" fill="#ffffff" stroke="#3e3430" stroke-width="1.1"/>
<path d="M704.5,377.3 L710.3,368.3 L714,373.2 L716,377.3 Z" fill="#0000ff"/><circle cx="713.6" cy="374.9" r="2.7" fill="#0000ff"/><path d="M707.5,376.2 L710,372.7 L711.5,376.2 Z" fill="#ffffff" opacity="0.5"/>
<rect x="719.5" y="370.09999999999997" width="4.5" height="2.6" fill="#f4f400"/><rect x="719.5" y="374.7" width="4.5" height="2.6" fill="#f4f400"/>
<rect x="731.5" y="370.9" width="25.5" height="5.6" fill="#ffffff" stroke="#4e382c" stroke-width="0.9"/>
<text x="733.5" y="375.59999999999997" font-size="5.2" fill="#111" text-anchor="start" font-weight="bold" font-style="normal" font-family="Liberation Sans" textLength="21.5" lengthAdjust="spacingAndGlyphs" stroke="#111" stroke-width="0.35">XX.X GPM</text>
<path d="M702.5,376.7 L706,383.5 L716,383.5" stroke="#4e382c" stroke-width="0.9" fill="none"/>
<text x="707" y="382.5" font-size="4.8" fill="#111" text-anchor="start" font-weight="bold" font-style="normal" font-family="Liberation Sans" textLength="8" lengthAdjust="spacingAndGlyphs" stroke="#111" stroke-width="0.3">ø6"</text>
<polygon points="696.80,382.30 694.90,385.59 691.10,385.59 689.20,382.30 691.10,379.01 694.90,379.01" fill="#ffffff" stroke="#3e3430" stroke-width="1.1"/><path d="M677,386.3 L688,386.3 L690.5,382.3" stroke="#4e382c" stroke-width="0.9" fill="none"/><text x="678.5" y="385.3" font-size="4.8" fill="#111" text-anchor="start" font-weight="bold" font-style="normal" font-family="Liberation Sans" textLength="8" lengthAdjust="spacingAndGlyphs" stroke="#111" stroke-width="0.3">ø6"</text>
<rect x="689.3" y="391.3" width="2.2" height="5" fill="#f4f400"/><rect x="694.9" y="391.3" width="2.2" height="5" fill="#f4f400"/>
<path d="M690.3,402.5 L727,402.5" stroke="#1878b8" stroke-width="1.4" stroke-dasharray="5,1.5"/>
<path d="M696,407.0 L727,407.0" stroke="#16c0ff" stroke-width="1.5"/>
<polygon points="704.00,404.80 702.30,407.74 698.90,407.74 697.20,404.80 698.90,401.86 702.30,401.86" fill="#ffffff" stroke="#3e3430" stroke-width="1.1"/>
<path d="M704.5,408.40000000000003 L710.3,399.40000000000003 L714,404.3 L716,408.40000000000003 Z" fill="#0000ff"/><circle cx="713.6" cy="406.0" r="2.7" fill="#0000ff"/><path d="M707.5,407.3 L710,403.8 L711.5,407.3 Z" fill="#ffffff" opacity="0.5"/>
<rect x="719.5" y="401.2" width="4.5" height="2.6" fill="#f4f400"/><rect x="719.5" y="405.8" width="4.5" height="2.6" fill="#f4f400"/>
<rect x="731.5" y="402.0" width="25.5" height="5.6" fill="#ffffff" stroke="#4e382c" stroke-width="0.9"/>
<text x="733.5" y="406.7" font-size="5.2" fill="#111" text-anchor="start" font-weight="bold" font-style="normal" font-family="Liberation Sans" textLength="21.5" lengthAdjust="spacingAndGlyphs" stroke="#111" stroke-width="0.35">XX.X GPM</text>
<path d="M702.5,407.8 L706,414.6 L716,414.6" stroke="#4e382c" stroke-width="0.9" fill="none"/>
<text x="707" y="413.6" font-size="4.8" fill="#111" text-anchor="start" font-weight="bold" font-style="normal" font-family="Liberation Sans" textLength="8" lengthAdjust="spacingAndGlyphs" stroke="#111" stroke-width="0.3">ø6"</text>
<polygon points="696.80,413.40 694.90,416.69 691.10,416.69 689.20,413.40 691.10,410.11 694.90,410.11" fill="#ffffff" stroke="#3e3430" stroke-width="1.1"/><path d="M677,417.40000000000003 L688,417.40000000000003 L690.5,413.40000000000003" stroke="#4e382c" stroke-width="0.9" fill="none"/><text x="678.5" y="416.40000000000003" font-size="4.8" fill="#111" text-anchor="start" font-weight="bold" font-style="normal" font-family="Liberation Sans" textLength="8" lengthAdjust="spacingAndGlyphs" stroke="#111" stroke-width="0.3">ø6"</text>
<rect x="689.3" y="422.2" width="2.2" height="5" fill="#f4f400"/><rect x="694.9" y="422.2" width="2.2" height="5" fill="#f4f400"/>
<path d="M690.3,433.4 L727,433.4" stroke="#1878b8" stroke-width="1.4" stroke-dasharray="5,1.5"/>
<path d="M696,437.9 L727,437.9" stroke="#16c0ff" stroke-width="1.5"/>
<polygon points="704.00,435.70 702.30,438.64 698.90,438.64 697.20,435.70 698.90,432.76 702.30,432.76" fill="#ffffff" stroke="#3e3430" stroke-width="1.1"/>
<path d="M704.5,439.3 L710.3,430.3 L714,435.2 L716,439.3 Z" fill="#0000ff"/><circle cx="713.6" cy="436.9" r="2.7" fill="#0000ff"/><path d="M707.5,438.2 L710,434.7 L711.5,438.2 Z" fill="#ffffff" opacity="0.5"/>
<rect x="719.5" y="432.09999999999997" width="4.5" height="2.6" fill="#f4f400"/><rect x="719.5" y="436.7" width="4.5" height="2.6" fill="#f4f400"/>
<rect x="731.5" y="432.9" width="25.5" height="5.6" fill="#ffffff" stroke="#4e382c" stroke-width="0.9"/>
<text x="733.5" y="437.59999999999997" font-size="5.2" fill="#111" text-anchor="start" font-weight="bold" font-style="normal" font-family="Liberation Sans" textLength="21.5" lengthAdjust="spacingAndGlyphs" stroke="#111" stroke-width="0.35">XX.X GPM</text>
<path d="M702.5,438.7 L706,445.5 L716,445.5" stroke="#4e382c" stroke-width="0.9" fill="none"/>
<text x="707" y="444.5" font-size="4.8" fill="#111" text-anchor="start" font-weight="bold" font-style="normal" font-family="Liberation Sans" textLength="8" lengthAdjust="spacingAndGlyphs" stroke="#111" stroke-width="0.3">ø6"</text>
<polygon points="696.80,444.30 694.90,447.59 691.10,447.59 689.20,444.30 691.10,441.01 694.90,441.01" fill="#ffffff" stroke="#3e3430" stroke-width="1.1"/><path d="M677,448.3 L688,448.3 L690.5,444.3" stroke="#4e382c" stroke-width="0.9" fill="none"/><text x="678.5" y="447.3" font-size="4.8" fill="#111" text-anchor="start" font-weight="bold" font-style="normal" font-family="Liberation Sans" textLength="8" lengthAdjust="spacingAndGlyphs" stroke="#111" stroke-width="0.3">ø6"</text>
<rect x="689.3" y="453.4" width="2.2" height="5" fill="#f4f400"/><rect x="694.9" y="453.4" width="2.2" height="5" fill="#f4f400"/>
<path d="M690.3,464.59999999999997 L727,464.59999999999997" stroke="#1878b8" stroke-width="1.4" stroke-dasharray="5,1.5"/>
<path d="M696,469.09999999999997 L727,469.09999999999997" stroke="#16c0ff" stroke-width="1.5"/>
<polygon points="704.00,466.90 702.30,469.84 698.90,469.84 697.20,466.90 698.90,463.96 702.30,463.96" fill="#ffffff" stroke="#3e3430" stroke-width="1.1"/>
<path d="M704.5,470.5 L710.3,461.5 L714,466.4 L716,470.5 Z" fill="#0000ff"/><circle cx="713.6" cy="468.09999999999997" r="2.7" fill="#0000ff"/><path d="M707.5,469.4 L710,465.9 L711.5,469.4 Z" fill="#ffffff" opacity="0.5"/>
<rect x="719.5" y="463.29999999999995" width="4.5" height="2.6" fill="#f4f400"/><rect x="719.5" y="467.9" width="4.5" height="2.6" fill="#f4f400"/>
<rect x="731.5" y="464.09999999999997" width="25.5" height="5.6" fill="#ffffff" stroke="#4e382c" stroke-width="0.9"/>
<text x="733.5" y="468.79999999999995" font-size="5.2" fill="#111" text-anchor="start" font-weight="bold" font-style="normal" font-family="Liberation Sans" textLength="21.5" lengthAdjust="spacingAndGlyphs" stroke="#111" stroke-width="0.35">XX.X GPM</text>
<path d="M702.5,469.9 L706,476.7 L716,476.7" stroke="#4e382c" stroke-width="0.9" fill="none"/>
<text x="707" y="475.7" font-size="4.8" fill="#111" text-anchor="start" font-weight="bold" font-style="normal" font-family="Liberation Sans" textLength="8" lengthAdjust="spacingAndGlyphs" stroke="#111" stroke-width="0.3">ø6"</text>
<polygon points="696.80,475.50 694.90,478.79 691.10,478.79 689.20,475.50 691.10,472.21 694.90,472.21" fill="#ffffff" stroke="#3e3430" stroke-width="1.1"/><path d="M677,479.5 L688,479.5 L690.5,475.5" stroke="#4e382c" stroke-width="0.9" fill="none"/><text x="678.5" y="478.5" font-size="4.8" fill="#111" text-anchor="start" font-weight="bold" font-style="normal" font-family="Liberation Sans" textLength="8" lengthAdjust="spacingAndGlyphs" stroke="#111" stroke-width="0.3">ø6"</text>
<rect x="689.3" y="484.5" width="2.2" height="5" fill="#f4f400"/><rect x="694.9" y="484.5" width="2.2" height="5" fill="#f4f400"/>
<path d="M690.3,495.7 L727,495.7" stroke="#1878b8" stroke-width="1.4" stroke-dasharray="5,1.5"/>
<path d="M696,500.2 L727,500.2" stroke="#16c0ff" stroke-width="1.5"/>
<polygon points="704.00,498.00 702.30,500.94 698.90,500.94 697.20,498.00 698.90,495.06 702.30,495.06" fill="#ffffff" stroke="#3e3430" stroke-width="1.1"/>
<path d="M704.5,501.6 L710.3,492.6 L714,497.5 L716,501.6 Z" fill="#0000ff"/><circle cx="713.6" cy="499.2" r="2.7" fill="#0000ff"/><path d="M707.5,500.5 L710,497.0 L711.5,500.5 Z" fill="#ffffff" opacity="0.5"/>
<rect x="719.5" y="494.4" width="4.5" height="2.6" fill="#f4f400"/><rect x="719.5" y="499.0" width="4.5" height="2.6" fill="#f4f400"/>
<rect x="731.5" y="495.2" width="25.5" height="5.6" fill="#ffffff" stroke="#4e382c" stroke-width="0.9"/>
<text x="733.5" y="499.9" font-size="5.2" fill="#111" text-anchor="start" font-weight="bold" font-style="normal" font-family="Liberation Sans" textLength="21.5" lengthAdjust="spacingAndGlyphs" stroke="#111" stroke-width="0.35">XX.X GPM</text>
<path d="M702.5,501.0 L706,507.8 L716,507.8" stroke="#4e382c" stroke-width="0.9" fill="none"/>
<text x="707" y="506.8" font-size="4.8" fill="#111" text-anchor="start" font-weight="bold" font-style="normal" font-family="Liberation Sans" textLength="8" lengthAdjust="spacingAndGlyphs" stroke="#111" stroke-width="0.3">ø6"</text>
<polygon points="696.80,506.60 694.90,509.89 691.10,509.89 689.20,506.60 691.10,503.31 694.90,503.31" fill="#ffffff" stroke="#3e3430" stroke-width="1.1"/><path d="M677,510.6 L688,510.6 L690.5,506.6" stroke="#4e382c" stroke-width="0.9" fill="none"/><text x="678.5" y="509.6" font-size="4.8" fill="#111" text-anchor="start" font-weight="bold" font-style="normal" font-family="Liberation Sans" textLength="8" lengthAdjust="spacingAndGlyphs" stroke="#111" stroke-width="0.3">ø6"</text>
<rect x="689.3" y="515.6" width="2.2" height="5" fill="#f4f400"/><rect x="694.9" y="515.6" width="2.2" height="5" fill="#f4f400"/>
<path d="M690.3,526.8000000000001 L727,526.8000000000001" stroke="#1878b8" stroke-width="1.4" stroke-dasharray="5,1.5"/>
<path d="M696,531.3000000000001 L727,531.3000000000001" stroke="#16c0ff" stroke-width="1.5"/>
<polygon points="704.00,529.10 702.30,532.04 698.90,532.04 697.20,529.10 698.90,526.16 702.30,526.16" fill="#ffffff" stroke="#3e3430" stroke-width="1.1"/>
<path d="M704.5,532.7 L710.3,523.7 L714,528.6 L716,532.7 Z" fill="#0000ff"/><circle cx="713.6" cy="530.3000000000001" r="2.7" fill="#0000ff"/><path d="M707.5,531.6 L710,528.1 L711.5,531.6 Z" fill="#ffffff" opacity="0.5"/>
<rect x="719.5" y="525.5" width="4.5" height="2.6" fill="#f4f400"/><rect x="719.5" y="530.1" width="4.5" height="2.6" fill="#f4f400"/>
<rect x="731.5" y="526.3000000000001" width="25.5" height="5.6" fill="#ffffff" stroke="#4e382c" stroke-width="0.9"/>
<text x="733.5" y="531.0" font-size="5.2" fill="#111" text-anchor="start" font-weight="bold" font-style="normal" font-family="Liberation Sans" textLength="21.5" lengthAdjust="spacingAndGlyphs" stroke="#111" stroke-width="0.35">XX.X GPM</text>
<path d="M702.5,532.1 L706,538.9 L716,538.9" stroke="#4e382c" stroke-width="0.9" fill="none"/>
<text x="707" y="537.9" font-size="4.8" fill="#111" text-anchor="start" font-weight="bold" font-style="normal" font-family="Liberation Sans" textLength="8" lengthAdjust="spacingAndGlyphs" stroke="#111" stroke-width="0.3">ø6"</text>
<polygon points="696.80,537.70 694.90,540.99 691.10,540.99 689.20,537.70 691.10,534.41 694.90,534.41" fill="#ffffff" stroke="#3e3430" stroke-width="1.1"/><path d="M677,541.7 L688,541.7 L690.5,537.7" stroke="#4e382c" stroke-width="0.9" fill="none"/><text x="678.5" y="540.7" font-size="4.8" fill="#111" text-anchor="start" font-weight="bold" font-style="normal" font-family="Liberation Sans" textLength="8" lengthAdjust="spacingAndGlyphs" stroke="#111" stroke-width="0.3">ø6"</text>
<rect x="689.3" y="546.7" width="2.2" height="5" fill="#f4f400"/><rect x="694.9" y="546.7" width="2.2" height="5" fill="#f4f400"/>
<path d="M690.3,557.9000000000001 L727,557.9000000000001" stroke="#1878b8" stroke-width="1.4" stroke-dasharray="5,1.5"/>
<path d="M696,562.4000000000001 L727,562.4000000000001" stroke="#16c0ff" stroke-width="1.5"/>
<polygon points="704.00,560.20 702.30,563.14 698.90,563.14 697.20,560.20 698.90,557.26 702.30,557.26" fill="#ffffff" stroke="#3e3430" stroke-width="1.1"/>
<path d="M704.5,563.8000000000001 L710.3,554.8000000000001 L714,559.7 L716,563.8000000000001 Z" fill="#0000ff"/><circle cx="713.6" cy="561.4000000000001" r="2.7" fill="#0000ff"/><path d="M707.5,562.7 L710,559.2 L711.5,562.7 Z" fill="#ffffff" opacity="0.5"/>
<rect x="719.5" y="556.6" width="4.5" height="2.6" fill="#f4f400"/><rect x="719.5" y="561.2" width="4.5" height="2.6" fill="#f4f400"/>
<rect x="731.5" y="557.4000000000001" width="25.5" height="5.6" fill="#ffffff" stroke="#4e382c" stroke-width="0.9"/>
<text x="733.5" y="562.1" font-size="5.2" fill="#111" text-anchor="start" font-weight="bold" font-style="normal" font-family="Liberation Sans" textLength="21.5" lengthAdjust="spacingAndGlyphs" stroke="#111" stroke-width="0.35">XX.X GPM</text>
<path d="M702.5,563.2 L706,570.0 L716,570.0" stroke="#4e382c" stroke-width="0.9" fill="none"/>
<text x="707" y="569.0" font-size="4.8" fill="#111" text-anchor="start" font-weight="bold" font-style="normal" font-family="Liberation Sans" textLength="8" lengthAdjust="spacingAndGlyphs" stroke="#111" stroke-width="0.3">ø6"</text>
<polygon points="696.80,568.80 694.90,572.09 691.10,572.09 689.20,568.80 691.10,565.51 694.90,565.51" fill="#ffffff" stroke="#3e3430" stroke-width="1.1"/><path d="M677,572.8000000000001 L688,572.8000000000001 L690.5,568.8000000000001" stroke="#4e382c" stroke-width="0.9" fill="none"/><text x="678.5" y="571.8000000000001" font-size="4.8" fill="#111" text-anchor="start" font-weight="bold" font-style="normal" font-family="Liberation Sans" textLength="8" lengthAdjust="spacingAndGlyphs" stroke="#111" stroke-width="0.3">ø6"</text>
<rect x="689.3" y="577.8" width="2.2" height="5" fill="#f4f400"/><rect x="694.9" y="577.8" width="2.2" height="5" fill="#f4f400"/>
<path d="M690.3,589.0 L727,589.0" stroke="#1878b8" stroke-width="1.4" stroke-dasharray="5,1.5"/>
<path d="M696,593.5 L727,593.5" stroke="#16c0ff" stroke-width="1.5"/>
<polygon points="704.00,591.30 702.30,594.24 698.90,594.24 697.20,591.30 698.90,588.36 702.30,588.36" fill="#ffffff" stroke="#3e3430" stroke-width="1.1"/>
<path d="M704.5,594.9 L710.3,585.9 L714,590.8 L716,594.9 Z" fill="#0000ff"/><circle cx="713.6" cy="592.5" r="2.7" fill="#0000ff"/><path d="M707.5,593.8 L710,590.3 L711.5,593.8 Z" fill="#ffffff" opacity="0.5"/>
<rect x="719.5" y="587.6999999999999" width="4.5" height="2.6" fill="#f4f400"/><rect x="719.5" y="592.3" width="4.5" height="2.6" fill="#f4f400"/>
<rect x="731.5" y="588.5" width="25.5" height="5.6" fill="#ffffff" stroke="#4e382c" stroke-width="0.9"/>
<text x="733.5" y="593.1999999999999" font-size="5.2" fill="#111" text-anchor="start" font-weight="bold" font-style="normal" font-family="Liberation Sans" textLength="21.5" lengthAdjust="spacingAndGlyphs" stroke="#111" stroke-width="0.35">XX.X GPM</text>
<path d="M702.5,594.3 L706,601.0999999999999 L716,601.0999999999999" stroke="#4e382c" stroke-width="0.9" fill="none"/>
<text x="707" y="600.0999999999999" font-size="4.8" fill="#111" text-anchor="start" font-weight="bold" font-style="normal" font-family="Liberation Sans" textLength="8" lengthAdjust="spacingAndGlyphs" stroke="#111" stroke-width="0.3">ø6"</text>
<polygon points="696.80,599.90 694.90,603.19 691.10,603.19 689.20,599.90 691.10,596.61 694.90,596.61" fill="#ffffff" stroke="#3e3430" stroke-width="1.1"/><path d="M677,603.9 L688,603.9 L690.5,599.9" stroke="#4e382c" stroke-width="0.9" fill="none"/><text x="678.5" y="602.9" font-size="4.8" fill="#111" text-anchor="start" font-weight="bold" font-style="normal" font-family="Liberation Sans" textLength="8" lengthAdjust="spacingAndGlyphs" stroke="#111" stroke-width="0.3">ø6"</text>
<rect x="689.3" y="608.9" width="2.2" height="5" fill="#f4f400"/><rect x="694.9" y="608.9" width="2.2" height="5" fill="#f4f400"/>
<path d="M690.3,620.1 L727,620.1" stroke="#1878b8" stroke-width="1.4" stroke-dasharray="5,1.5"/>
<path d="M696,624.6 L727,624.6" stroke="#16c0ff" stroke-width="1.5"/>
<polygon points="704.00,622.40 702.30,625.34 698.90,625.34 697.20,622.40 698.90,619.46 702.30,619.46" fill="#ffffff" stroke="#3e3430" stroke-width="1.1"/>
<path d="M704.5,626.0 L710.3,617.0 L714,621.9 L716,626.0 Z" fill="#0000ff"/><circle cx="713.6" cy="623.6" r="2.7" fill="#0000ff"/><path d="M707.5,624.9 L710,621.4 L711.5,624.9 Z" fill="#ffffff" opacity="0.5"/>
<rect x="719.5" y="618.8" width="4.5" height="2.6" fill="#f4f400"/><rect x="719.5" y="623.4" width="4.5" height="2.6" fill="#f4f400"/>
<rect x="731.5" y="619.6" width="25.5" height="5.6" fill="#ffffff" stroke="#4e382c" stroke-width="0.9"/>
<text x="733.5" y="624.3" font-size="5.2" fill="#111" text-anchor="start" font-weight="bold" font-style="normal" font-family="Liberation Sans" textLength="21.5" lengthAdjust="spacingAndGlyphs" stroke="#111" stroke-width="0.35">XX.X GPM</text>
<path d="M702.5,625.4 L706,632.1999999999999 L716,632.1999999999999" stroke="#4e382c" stroke-width="0.9" fill="none"/>
<text x="707" y="631.1999999999999" font-size="4.8" fill="#111" text-anchor="start" font-weight="bold" font-style="normal" font-family="Liberation Sans" textLength="8" lengthAdjust="spacingAndGlyphs" stroke="#111" stroke-width="0.3">ø6"</text>
<polygon points="696.80,631.00 694.90,634.29 691.10,634.29 689.20,631.00 691.10,627.71 694.90,627.71" fill="#ffffff" stroke="#3e3430" stroke-width="1.1"/><path d="M677,635.0 L688,635.0 L690.5,631.0" stroke="#4e382c" stroke-width="0.9" fill="none"/><text x="678.5" y="634.0" font-size="4.8" fill="#111" text-anchor="start" font-weight="bold" font-style="normal" font-family="Liberation Sans" textLength="8" lengthAdjust="spacingAndGlyphs" stroke="#111" stroke-width="0.3">ø6"</text>
<rect x="689.3" y="639.8" width="2.2" height="5" fill="#f4f400"/><rect x="694.9" y="639.8" width="2.2" height="5" fill="#f4f400"/>
<path d="M690.3,651.0 L727,651.0" stroke="#1878b8" stroke-width="1.4" stroke-dasharray="5,1.5"/>
<path d="M696,655.5 L727,655.5" stroke="#16c0ff" stroke-width="1.5"/>
<polygon points="704.00,653.30 702.30,656.24 698.90,656.24 697.20,653.30 698.90,650.36 702.30,650.36" fill="#ffffff" stroke="#3e3430" stroke-width="1.1"/>
<path d="M704.5,656.9 L710.3,647.9 L714,652.8 L716,656.9 Z" fill="#0000ff"/><circle cx="713.6" cy="654.5" r="2.7" fill="#0000ff"/><path d="M707.5,655.8 L710,652.3 L711.5,655.8 Z" fill="#ffffff" opacity="0.5"/>
<rect x="719.5" y="649.6999999999999" width="4.5" height="2.6" fill="#f4f400"/><rect x="719.5" y="654.3" width="4.5" height="2.6" fill="#f4f400"/>
<rect x="731.5" y="650.5" width="25.5" height="5.6" fill="#ffffff" stroke="#4e382c" stroke-width="0.9"/>
<text x="733.5" y="655.1999999999999" font-size="5.2" fill="#111" text-anchor="start" font-weight="bold" font-style="normal" font-family="Liberation Sans" textLength="21.5" lengthAdjust="spacingAndGlyphs" stroke="#111" stroke-width="0.35">XX.X GPM</text>
<path d="M702.5,656.3 L706,663.0999999999999 L716,663.0999999999999" stroke="#4e382c" stroke-width="0.9" fill="none"/>
<text x="707" y="662.0999999999999" font-size="4.8" fill="#111" text-anchor="start" font-weight="bold" font-style="normal" font-family="Liberation Sans" textLength="8" lengthAdjust="spacingAndGlyphs" stroke="#111" stroke-width="0.3">ø6"</text>
<polygon points="696.80,661.90 694.90,665.19 691.10,665.19 689.20,661.90 691.10,658.61 694.90,658.61" fill="#ffffff" stroke="#3e3430" stroke-width="1.1"/><path d="M677,665.9 L688,665.9 L690.5,661.9" stroke="#4e382c" stroke-width="0.9" fill="none"/><text x="678.5" y="664.9" font-size="4.8" fill="#111" text-anchor="start" font-weight="bold" font-style="normal" font-family="Liberation Sans" textLength="8" lengthAdjust="spacingAndGlyphs" stroke="#111" stroke-width="0.3">ø6"</text>
<rect x="689.3" y="670.8" width="2.2" height="5" fill="#f4f400"/><rect x="694.9" y="670.8" width="2.2" height="5" fill="#f4f400"/>
<path d="M690.3,682.0 L727,682.0" stroke="#1878b8" stroke-width="1.4" stroke-dasharray="5,1.5"/>
<path d="M696,686.5 L727,686.5" stroke="#16c0ff" stroke-width="1.5"/>
<polygon points="704.00,684.30 702.30,687.24 698.90,687.24 697.20,684.30 698.90,681.36 702.30,681.36" fill="#ffffff" stroke="#3e3430" stroke-width="1.1"/>
<path d="M704.5,687.9 L710.3,678.9 L714,683.8 L716,687.9 Z" fill="#0000ff"/><circle cx="713.6" cy="685.5" r="2.7" fill="#0000ff"/><path d="M707.5,686.8 L710,683.3 L711.5,686.8 Z" fill="#ffffff" opacity="0.5"/>
<rect x="719.5" y="680.6999999999999" width="4.5" height="2.6" fill="#f4f400"/><rect x="719.5" y="685.3" width="4.5" height="2.6" fill="#f4f400"/>
<rect x="731.5" y="681.5" width="25.5" height="5.6" fill="#ffffff" stroke="#4e382c" stroke-width="0.9"/>
<text x="733.5" y="686.1999999999999" font-size="5.2" fill="#111" text-anchor="start" font-weight="bold" font-style="normal" font-family="Liberation Sans" textLength="21.5" lengthAdjust="spacingAndGlyphs" stroke="#111" stroke-width="0.35">XX.X GPM</text>
<path d="M702.5,687.3 L706,694.0999999999999 L716,694.0999999999999" stroke="#4e382c" stroke-width="0.9" fill="none"/>
<text x="707" y="693.0999999999999" font-size="4.8" fill="#111" text-anchor="start" font-weight="bold" font-style="normal" font-family="Liberation Sans" textLength="8" lengthAdjust="spacingAndGlyphs" stroke="#111" stroke-width="0.3">ø6"</text>
<polygon points="696.80,692.90 694.90,696.19 691.10,696.19 689.20,692.90 691.10,689.61 694.90,689.61" fill="#ffffff" stroke="#3e3430" stroke-width="1.1"/><path d="M677,696.9 L688,696.9 L690.5,692.9" stroke="#4e382c" stroke-width="0.9" fill="none"/><text x="678.5" y="695.9" font-size="4.8" fill="#111" text-anchor="start" font-weight="bold" font-style="normal" font-family="Liberation Sans" textLength="8" lengthAdjust="spacingAndGlyphs" stroke="#111" stroke-width="0.3">ø6"</text>
<rect x="689.3" y="701.7" width="2.2" height="5" fill="#f4f400"/><rect x="694.9" y="701.7" width="2.2" height="5" fill="#f4f400"/>
<path d="M690.3,712.9000000000001 L727,712.9000000000001" stroke="#1878b8" stroke-width="1.4" stroke-dasharray="5,1.5"/>
<path d="M696,717.4000000000001 L727,717.4000000000001" stroke="#16c0ff" stroke-width="1.5"/>
<polygon points="704.00,715.20 702.30,718.14 698.90,718.14 697.20,715.20 698.90,712.26 702.30,712.26" fill="#ffffff" stroke="#3e3430" stroke-width="1.1"/>
<path d="M704.5,718.8000000000001 L710.3,709.8000000000001 L714,714.7 L716,718.8000000000001 Z" fill="#0000ff"/><circle cx="713.6" cy="716.4000000000001" r="2.7" fill="#0000ff"/><path d="M707.5,717.7 L710,714.2 L711.5,717.7 Z" fill="#ffffff" opacity="0.5"/>
<rect x="719.5" y="711.6" width="4.5" height="2.6" fill="#f4f400"/><rect x="719.5" y="716.2" width="4.5" height="2.6" fill="#f4f400"/>
<rect x="731.5" y="712.4000000000001" width="25.5" height="5.6" fill="#ffffff" stroke="#4e382c" stroke-width="0.9"/>
<text x="733.5" y="717.1" font-size="5.2" fill="#111" text-anchor="start" font-weight="bold" font-style="normal" font-family="Liberation Sans" textLength="21.5" lengthAdjust="spacingAndGlyphs" stroke="#111" stroke-width="0.35">XX.X GPM</text>
<path d="M702.5,718.2 L706,725.0 L716,725.0" stroke="#4e382c" stroke-width="0.9" fill="none"/>
<text x="707" y="724.0" font-size="4.8" fill="#111" text-anchor="start" font-weight="bold" font-style="normal" font-family="Liberation Sans" textLength="8" lengthAdjust="spacingAndGlyphs" stroke="#111" stroke-width="0.3">ø6"</text>
<polygon points="696.80,723.80 694.90,727.09 691.10,727.09 689.20,723.80 691.10,720.51 694.90,720.51" fill="#ffffff" stroke="#3e3430" stroke-width="1.1"/><path d="M677,727.8000000000001 L688,727.8000000000001 L690.5,723.8000000000001" stroke="#4e382c" stroke-width="0.9" fill="none"/><text x="678.5" y="726.8000000000001" font-size="4.8" fill="#111" text-anchor="start" font-weight="bold" font-style="normal" font-family="Liberation Sans" textLength="8" lengthAdjust="spacingAndGlyphs" stroke="#111" stroke-width="0.3">ø6"</text>
<rect x="689.3" y="732.8" width="2.2" height="5" fill="#f4f400"/><rect x="694.9" y="732.8" width="2.2" height="5" fill="#f4f400"/>
<path d="M690.3,744.0 L727,744.0" stroke="#1878b8" stroke-width="1.4" stroke-dasharray="5,1.5"/>
<path d="M696,748.5 L727,748.5" stroke="#16c0ff" stroke-width="1.5"/>
<polygon points="704.00,746.30 702.30,749.24 698.90,749.24 697.20,746.30 698.90,743.36 702.30,743.36" fill="#ffffff" stroke="#3e3430" stroke-width="1.1"/>
<path d="M704.5,749.9 L710.3,740.9 L714,745.8 L716,749.9 Z" fill="#0000ff"/><circle cx="713.6" cy="747.5" r="2.7" fill="#0000ff"/><path d="M707.5,748.8 L710,745.3 L711.5,748.8 Z" fill="#ffffff" opacity="0.5"/>
<rect x="719.5" y="742.6999999999999" width="4.5" height="2.6" fill="#f4f400"/><rect x="719.5" y="747.3" width="4.5" height="2.6" fill="#f4f400"/>
<rect x="731.5" y="743.5" width="25.5" height="5.6" fill="#ffffff" stroke="#4e382c" stroke-width="0.9"/>
<text x="733.5" y="748.1999999999999" font-size="5.2" fill="#111" text-anchor="start" font-weight="bold" font-style="normal" font-family="Liberation Sans" textLength="21.5" lengthAdjust="spacingAndGlyphs" stroke="#111" stroke-width="0.35">XX.X GPM</text>
<path d="M702.5,749.3 L706,756.0999999999999 L716,756.0999999999999" stroke="#4e382c" stroke-width="0.9" fill="none"/>
<text x="707" y="755.0999999999999" font-size="4.8" fill="#111" text-anchor="start" font-weight="bold" font-style="normal" font-family="Liberation Sans" textLength="8" lengthAdjust="spacingAndGlyphs" stroke="#111" stroke-width="0.3">ø6"</text>
<polygon points="696.80,754.90 694.90,758.19 691.10,758.19 689.20,754.90 691.10,751.61 694.90,751.61" fill="#ffffff" stroke="#3e3430" stroke-width="1.1"/><path d="M677,758.9 L688,758.9 L690.5,754.9" stroke="#4e382c" stroke-width="0.9" fill="none"/><text x="678.5" y="757.9" font-size="4.8" fill="#111" text-anchor="start" font-weight="bold" font-style="normal" font-family="Liberation Sans" textLength="8" lengthAdjust="spacingAndGlyphs" stroke="#111" stroke-width="0.3">ø6"</text>
<rect x="689.3" y="763.9" width="2.2" height="5" fill="#f4f400"/><rect x="694.9" y="763.9" width="2.2" height="5" fill="#f4f400"/>
<path d="M690.3,775.1 L727,775.1" stroke="#1878b8" stroke-width="1.4" stroke-dasharray="5,1.5"/>
<path d="M696,779.6 L727,779.6" stroke="#16c0ff" stroke-width="1.5"/>
<polygon points="704.00,777.40 702.30,780.34 698.90,780.34 697.20,777.40 698.90,774.46 702.30,774.46" fill="#ffffff" stroke="#3e3430" stroke-width="1.1"/>
<path d="M704.5,781.0 L710.3,772.0 L714,776.9 L716,781.0 Z" fill="#0000ff"/><circle cx="713.6" cy="778.6" r="2.7" fill="#0000ff"/><path d="M707.5,779.9 L710,776.4 L711.5,779.9 Z" fill="#ffffff" opacity="0.5"/>
<rect x="719.5" y="773.8" width="4.5" height="2.6" fill="#f4f400"/><rect x="719.5" y="778.4" width="4.5" height="2.6" fill="#f4f400"/>
<rect x="731.5" y="774.6" width="25.5" height="5.6" fill="#ffffff" stroke="#4e382c" stroke-width="0.9"/>
<text x="733.5" y="779.3" font-size="5.2" fill="#111" text-anchor="start" font-weight="bold" font-style="normal" font-family="Liberation Sans" textLength="21.5" lengthAdjust="spacingAndGlyphs" stroke="#111" stroke-width="0.35">XXX.X GPM</text>
<path d="M702.5,780.4 L706,787.1999999999999 L720,787.1999999999999" stroke="#4e382c" stroke-width="0.9" fill="none"/>
<text x="707" y="786.1999999999999" font-size="4.8" fill="#111" text-anchor="start" font-weight="bold" font-style="normal" font-family="Liberation Sans" textLength="12" lengthAdjust="spacingAndGlyphs" stroke="#111" stroke-width="0.3">ø2/2"</text>
<polygon points="696.80,786.00 694.90,789.29 691.10,789.29 689.20,786.00 691.10,782.71 694.90,782.71" fill="#ffffff" stroke="#3e3430" stroke-width="1.1"/><path d="M677,790.0 L688,790.0 L690.5,786.0" stroke="#4e382c" stroke-width="0.9" fill="none"/><text x="678.5" y="789.0" font-size="4.8" fill="#111" text-anchor="start" font-weight="bold" font-style="normal" font-family="Liberation Sans" textLength="8" lengthAdjust="spacingAndGlyphs" stroke="#111" stroke-width="0.3">ø6"</text>
<rect x="689.3" y="811.3" width="2.2" height="5" fill="#f4f400"/><rect x="694.9" y="811.3" width="2.2" height="5" fill="#f4f400"/>
<path d="M690.3,822.5 L727,822.5" stroke="#1878b8" stroke-width="1.4" stroke-dasharray="5,1.5"/>
<path d="M696,827.0 L727,827.0" stroke="#16c0ff" stroke-width="1.5"/>
<polygon points="704.00,824.80 702.30,827.74 698.90,827.74 697.20,824.80 698.90,821.86 702.30,821.86" fill="#ffffff" stroke="#3e3430" stroke-width="1.1"/>
<path d="M704.5,828.4 L710.3,819.4 L714,824.3 L716,828.4 Z" fill="#0000ff"/><circle cx="713.6" cy="826.0" r="2.7" fill="#0000ff"/><path d="M707.5,827.3 L710,823.8 L711.5,827.3 Z" fill="#ffffff" opacity="0.5"/>
<rect x="719.5" y="821.1999999999999" width="4.5" height="2.6" fill="#f4f400"/><rect x="719.5" y="825.8" width="4.5" height="2.6" fill="#f4f400"/>
<rect x="731.5" y="822.0" width="25.5" height="5.6" fill="#ffffff" stroke="#4e382c" stroke-width="0.9"/>
<text x="733.5" y="826.6999999999999" font-size="5.2" fill="#111" text-anchor="start" font-weight="bold" font-style="normal" font-family="Liberation Sans" textLength="21.5" lengthAdjust="spacingAndGlyphs" stroke="#111" stroke-width="0.35">XX GPM</text>
<path d="M702.5,827.8 L706,834.5999999999999 L720,834.5999999999999" stroke="#4e382c" stroke-width="0.9" fill="none"/>
<text x="707" y="833.5999999999999" font-size="4.8" fill="#111" text-anchor="start" font-weight="bold" font-style="normal" font-family="Liberation Sans" textLength="12" lengthAdjust="spacingAndGlyphs" stroke="#111" stroke-width="0.3">ø2/2"</text>
<polygon points="696.80,833.40 694.90,836.69 691.10,836.69 689.20,833.40 691.10,830.11 694.90,830.11" fill="#ffffff" stroke="#3e3430" stroke-width="1.1"/><path d="M677,837.4 L688,837.4 L690.5,833.4" stroke="#4e382c" stroke-width="0.9" fill="none"/><text x="678.5" y="836.4" font-size="4.8" fill="#111" text-anchor="start" font-weight="bold" font-style="normal" font-family="Liberation Sans" textLength="8" lengthAdjust="spacingAndGlyphs" stroke="#111" stroke-width="0.3">ø6"</text>
<rect x="689.3" y="837.2" width="2.2" height="5" fill="#f4f400"/><rect x="694.9" y="837.2" width="2.2" height="5" fill="#f4f400"/>
<path d="M690.3,848.4000000000001 L727,848.4000000000001" stroke="#1878b8" stroke-width="1.4" stroke-dasharray="5,1.5"/>
<path d="M696,852.9000000000001 L727,852.9000000000001" stroke="#16c0ff" stroke-width="1.5"/>
<polygon points="704.00,850.70 702.30,853.64 698.90,853.64 697.20,850.70 698.90,847.76 702.30,847.76" fill="#ffffff" stroke="#3e3430" stroke-width="1.1"/>
<path d="M704.5,854.3000000000001 L710.3,845.3000000000001 L714,850.2 L716,854.3000000000001 Z" fill="#0000ff"/><circle cx="713.6" cy="851.9000000000001" r="2.7" fill="#0000ff"/><path d="M707.5,853.2 L710,849.7 L711.5,853.2 Z" fill="#ffffff" opacity="0.5"/>
<rect x="719.5" y="847.1" width="4.5" height="2.6" fill="#f4f400"/><rect x="719.5" y="851.7" width="4.5" height="2.6" fill="#f4f400"/>
<rect x="731.5" y="847.9000000000001" width="25.5" height="5.6" fill="#ffffff" stroke="#4e382c" stroke-width="0.9"/>
<text x="733.5" y="852.6" font-size="5.2" fill="#111" text-anchor="start" font-weight="bold" font-style="normal" font-family="Liberation Sans" textLength="21.5" lengthAdjust="spacingAndGlyphs" stroke="#111" stroke-width="0.35">XX GPM</text>
<path d="M702.5,853.7 L706,860.5 L720,860.5" stroke="#4e382c" stroke-width="0.9" fill="none"/>
<text x="707" y="859.5" font-size="4.8" fill="#111" text-anchor="start" font-weight="bold" font-style="normal" font-family="Liberation Sans" textLength="12" lengthAdjust="spacingAndGlyphs" stroke="#111" stroke-width="0.3">ø2/2"</text>
<polygon points="696.80,859.30 694.90,862.59 691.10,862.59 689.20,859.30 691.10,856.01 694.90,856.01" fill="#ffffff" stroke="#3e3430" stroke-width="1.1"/><path d="M677,863.3000000000001 L688,863.3000000000001 L690.5,859.3000000000001" stroke="#4e382c" stroke-width="0.9" fill="none"/><text x="678.5" y="862.3000000000001" font-size="4.8" fill="#111" text-anchor="start" font-weight="bold" font-style="normal" font-family="Liberation Sans" textLength="8" lengthAdjust="spacingAndGlyphs" stroke="#111" stroke-width="0.3">ø6"</text>
<rect x="689.3" y="863.3" width="2.2" height="5" fill="#f4f400"/><rect x="694.9" y="863.3" width="2.2" height="5" fill="#f4f400"/>
<path d="M690.3,874.5 L727,874.5" stroke="#1878b8" stroke-width="1.4" stroke-dasharray="5,1.5"/>
<path d="M696,879.0 L727,879.0" stroke="#16c0ff" stroke-width="1.5"/>
<polygon points="704.00,876.80 702.30,879.74 698.90,879.74 697.20,876.80 698.90,873.86 702.30,873.86" fill="#ffffff" stroke="#3e3430" stroke-width="1.1"/>
<path d="M704.5,880.4 L710.3,871.4 L714,876.3 L716,880.4 Z" fill="#0000ff"/><circle cx="713.6" cy="878.0" r="2.7" fill="#0000ff"/><path d="M707.5,879.3 L710,875.8 L711.5,879.3 Z" fill="#ffffff" opacity="0.5"/>
<rect x="719.5" y="873.1999999999999" width="4.5" height="2.6" fill="#f4f400"/><rect x="719.5" y="877.8" width="4.5" height="2.6" fill="#f4f400"/>
<rect x="731.5" y="874.0" width="25.5" height="5.6" fill="#ffffff" stroke="#4e382c" stroke-width="0.9"/>
<text x="733.5" y="878.6999999999999" font-size="5.2" fill="#111" text-anchor="start" font-weight="bold" font-style="normal" font-family="Liberation Sans" textLength="21.5" lengthAdjust="spacingAndGlyphs" stroke="#111" stroke-width="0.35">4 GPM</text>
<path d="M702.5,879.8 L706,886.5999999999999 L716,886.5999999999999" stroke="#4e382c" stroke-width="0.9" fill="none"/>
<text x="707" y="885.5999999999999" font-size="4.8" fill="#111" text-anchor="start" font-weight="bold" font-style="normal" font-family="Liberation Sans" textLength="8" lengthAdjust="spacingAndGlyphs" stroke="#111" stroke-width="0.3">ø6"</text>
<polygon points="696.80,885.40 694.90,888.69 691.10,888.69 689.20,885.40 691.10,882.11 694.90,882.11" fill="#ffffff" stroke="#3e3430" stroke-width="1.1"/><path d="M677,889.4 L688,889.4 L690.5,885.4" stroke="#4e382c" stroke-width="0.9" fill="none"/><text x="678.5" y="888.4" font-size="4.8" fill="#111" text-anchor="start" font-weight="bold" font-style="normal" font-family="Liberation Sans" textLength="8" lengthAdjust="spacingAndGlyphs" stroke="#111" stroke-width="0.3">ø6"</text>
<rect x="689.3" y="893.2" width="2.2" height="5" fill="#f4f400"/><rect x="694.9" y="893.2" width="2.2" height="5" fill="#f4f400"/>
<path d="M690.3,904.4000000000001 L727,904.4000000000001" stroke="#1878b8" stroke-width="1.4" stroke-dasharray="5,1.5"/>
<path d="M696,908.9000000000001 L727,908.9000000000001" stroke="#16c0ff" stroke-width="1.5"/>
<polygon points="704.00,906.70 702.30,909.64 698.90,909.64 697.20,906.70 698.90,903.76 702.30,903.76" fill="#ffffff" stroke="#3e3430" stroke-width="1.1"/>
<path d="M704.5,910.3000000000001 L710.3,901.3000000000001 L714,906.2 L716,910.3000000000001 Z" fill="#0000ff"/><circle cx="713.6" cy="907.9000000000001" r="2.7" fill="#0000ff"/><path d="M707.5,909.2 L710,905.7 L711.5,909.2 Z" fill="#ffffff" opacity="0.5"/>
<rect x="719.5" y="903.1" width="4.5" height="2.6" fill="#f4f400"/><rect x="719.5" y="907.7" width="4.5" height="2.6" fill="#f4f400"/>
<rect x="731.5" y="903.9000000000001" width="25.5" height="5.6" fill="#ffffff" stroke="#4e382c" stroke-width="0.9"/>
<text x="733.5" y="908.6" font-size="5.2" fill="#111" text-anchor="start" font-weight="bold" font-style="normal" font-family="Liberation Sans" textLength="21.5" lengthAdjust="spacingAndGlyphs" stroke="#111" stroke-width="0.35">4 GPM</text>
<path d="M702.5,909.7 L706,916.5 L716,916.5" stroke="#4e382c" stroke-width="0.9" fill="none"/>
<text x="707" y="915.5" font-size="4.8" fill="#111" text-anchor="start" font-weight="bold" font-style="normal" font-family="Liberation Sans" textLength="8" lengthAdjust="spacingAndGlyphs" stroke="#111" stroke-width="0.3">ø6"</text>
<polygon points="696.80,915.30 694.90,918.59 691.10,918.59 689.20,915.30 691.10,912.01 694.90,912.01" fill="#ffffff" stroke="#3e3430" stroke-width="1.1"/><path d="M677,919.3000000000001 L688,919.3000000000001 L690.5,915.3000000000001" stroke="#4e382c" stroke-width="0.9" fill="none"/><text x="678.5" y="918.3000000000001" font-size="4.8" fill="#111" text-anchor="start" font-weight="bold" font-style="normal" font-family="Liberation Sans" textLength="8" lengthAdjust="spacingAndGlyphs" stroke="#111" stroke-width="0.3">ø6"</text>
<rect x="595.5" y="871.2" width="40.5" height="6.3" fill="#fff" stroke="#5a4032" stroke-width="0.9"/>
<text x="597.5" y="876.2" font-size="5" fill="#111" text-anchor="start" font-weight="bold" font-style="normal" font-family="Liberation Sans" textLength="36" lengthAdjust="spacingAndGlyphs" stroke="#111" stroke-width="0.3">FROM ETS ROOM</text>
<path d="M640,871.3 L690,871.3" stroke="#1a86d2" stroke-width="1.2" stroke-dasharray="4,1.5"/><path d="M640,873.6 L690,873.6" stroke="#16c0ff" stroke-width="1.5"/>
<path d="M640,870 L640,875" stroke="#2020ff" stroke-width="1.2"/>
<rect x="652" y="870.5" width="5" height="4" fill="#f4f400"/><rect x="675" y="870.5" width="5" height="4" fill="#f4f400"/>
<polygon points="669.60,873.00 667.80,876.12 664.20,876.12 662.40,873.00 664.20,869.88 667.80,869.88" fill="#ffffff" stroke="#3e3430" stroke-width="1.1"/>
<path d="M664.5,876.5 L661,883 L652,883" stroke="#5a4032" stroke-width="0.9" fill="none"/>
<text x="653" y="882" font-size="4.8" fill="#111" text-anchor="start" font-weight="bold" font-style="normal" font-family="Liberation Sans" textLength="8" lengthAdjust="spacingAndGlyphs" stroke="#111" stroke-width="0.3">ø10"</text>
<rect x="688.5" y="920.5" width="3" height="5" fill="#1010ff"/><rect x="694.5" y="920.5" width="3" height="5" fill="#1010ff"/>
<text x="698" y="925" font-size="5.5" fill="#111" text-anchor="start" font-weight="bold" font-style="normal" font-family="Liberation Sans" textLength="27" lengthAdjust="spacingAndGlyphs" stroke="#111" stroke-width="0.3">DRAIN BACK</text>
<rect x="689.5" y="926.5" width="8" height="5" fill="#fff" stroke="#1010ff" stroke-width="1.2"/><circle cx="693" cy="929" r="1.7" fill="none" stroke="#333" stroke-width="0.7"/>
<path d="M692.5,931.5 L692.5,937.5 L724,937.5" stroke="#5a4032" stroke-width="0.9" fill="none"/>
<text x="694" y="936.5" font-size="5" fill="#111" text-anchor="start" font-weight="bold" font-style="normal" font-family="Liberation Sans" textLength="29" lengthAdjust="spacingAndGlyphs" stroke="#111" stroke-width="0.3">TEST PROCESS</text>
<text x="592" y="960.5" font-size="17.5" fill="#4a4442" text-anchor="start" font-weight="normal" font-style="normal" font-family="Liberation Serif" textLength="68" lengthAdjust="spacingAndGlyphs" stroke="#4a4442" stroke-width="0.35">CHILLED</text>
<text x="672" y="960.5" font-size="17.5" fill="#4a4442" text-anchor="start" font-weight="normal" font-style="normal" font-family="Liberation Serif" textLength="55" lengthAdjust="spacingAndGlyphs" stroke="#4a4442" stroke-width="0.35">WATER</text>
<text x="739" y="960.5" font-size="17.5" fill="#4a4442" text-anchor="start" font-weight="normal" font-style="normal" font-family="Liberation Serif" textLength="47" lengthAdjust="spacingAndGlyphs" stroke="#4a4442" stroke-width="0.35">RISER</text>
<text x="801" y="960.5" font-size="17.5" fill="#4a4442" text-anchor="start" font-weight="normal" font-style="normal" font-family="Liberation Serif" textLength="7" lengthAdjust="spacingAndGlyphs" stroke="#4a4442" stroke-width="0.35">{</text>
<text x="819" y="960.5" font-size="17.5" fill="#4a4442" text-anchor="start" font-weight="normal" font-style="normal" font-family="Liberation Serif" textLength="19" lengthAdjust="spacingAndGlyphs" stroke="#4a4442" stroke-width="0.35">RO</text>
<text x="850" y="960.5" font-size="17.5" fill="#4a4442" text-anchor="start" font-weight="normal" font-style="normal" font-family="Liberation Serif" textLength="6" lengthAdjust="spacingAndGlyphs" stroke="#4a4442" stroke-width="0.35">}</text>
<path d="M590,966.8 L863,966.8" stroke="#6a4a3a" stroke-width="1"/><path d="M590,968.9 L863,968.9" stroke="#9a9a9a" stroke-width="1.2"/>
<path d="M1195,205.5 L1414.5,205.5" stroke="#000" stroke-width="1.3"/>
<path d="M1195,311 L1414.5,311" stroke="#000" stroke-width="1.3"/>
<path d="M1195,324.5 L1414.5,324.5" stroke="#000" stroke-width="2"/>
<path d="M1195,444.6 L1414.5,444.6" stroke="#000" stroke-width="1.5"/>
<path d="M1195,457.5 L1414.5,457.5" stroke="#000" stroke-width="1.5"/>
<path d="M1195,471 L1414.5,471" stroke="#000" stroke-width="2"/>
<path d="M1195,591.2 L1414.5,591.2" stroke="#000" stroke-width="1.5"/>
<path d="M1195,604 L1414.5,604" stroke="#000" stroke-width="1.5"/>
<path d="M1195,617.6 L1414.5,617.6" stroke="#000" stroke-width="2"/>
<path d="M1195,691.6 L1414.5,691.6" stroke="#000" stroke-width="1.5"/>
<path d="M1195,764.5 L1414.5,764.5" stroke="#000" stroke-width="2"/>
<path d="M1195,795.7 L1414.5,795.7" stroke="#000" stroke-width="2"/>
<path d="M1195,826.2 L1414.5,826.2" stroke="#000" stroke-width="1.5"/>
<path d="M1195,838.4 L1414.5,838.4" stroke="#000" stroke-width="1.5"/>
<path d="M1195,851.4 L1414.5,851.4" stroke="#000" stroke-width="2"/>
<path d="M1195,893.7 L1414.5,893.7" stroke="#000" stroke-width="2"/>
<path d="M1195,910.8 L1414.5,910.8" stroke="#000" stroke-width="2.4"/>
<path d="M1195,928.8 L1414.5,928.8" stroke="#000" stroke-width="2.4"/>
<path d="M1195,946.2 L1414.5,946.2" stroke="#000" stroke-width="2.4"/>
<path d="M1195,981 L1414.5,981" stroke="#000" stroke-width="2.4"/>
<path d="M1304.4,311 L1304.4,324.5" stroke="#000" stroke-width="1.5"/>
<path d="M1304.4,444.6 L1304.4,471" stroke="#000" stroke-width="1.5"/>
<path d="M1304.4,591.2 L1304.4,617.6" stroke="#000" stroke-width="1.5"/>
<path d="M1304.3,826.2 L1304.3,838.4" stroke="#000" stroke-width="1.5"/>
<path d="M1267.4,838.4 L1267.4,851.4" stroke="#000" stroke-width="1.5"/>
<path d="M1341.2,838.4 L1341.2,851.4" stroke="#000" stroke-width="1.5"/>
<path d="M1249.4,893.7 L1249.4,981" stroke="#000" stroke-width="2.4"/>
<path d="M1304.6,893.7 L1304.6,981" stroke="#000" stroke-width="2.4"/>
<path d="M1359.2,893.7 L1359.2,946.2" stroke="#000" stroke-width="2.4"/>
<path d="M1304.6,964.2 L1414.5,964.2" stroke="#000" stroke-width="2.4"/>
<rect x="1206" y="988" width="208" height="9" fill="#000"/><rect x="1206" y="982.5" width="18" height="5.5" fill="#000"/><rect x="1219" y="982.5" width="2" height="5" fill="#fff"/>
<text x="1240" y="189.3" font-size="13" fill="#000" text-anchor="start" font-weight="normal" font-style="normal" font-family="Liberation Serif" textLength="130" lengthAdjust="spacingAndGlyphs" >Fire Prevention Department</text>
<text x="1262" y="196.5" font-size="6.2" fill="#222" text-anchor="start" font-weight="normal" font-style="normal" font-family="Liberation Serif" textLength="88" lengthAdjust="spacingAndGlyphs" >General Directorate of Civil Defence</text>
<text x="1264" y="202.5" font-size="6.2" fill="#222" text-anchor="start" font-weight="normal" font-style="normal" font-family="Liberation Serif" textLength="82" lengthAdjust="spacingAndGlyphs" >Ministry of Interior, State of Qatar</text>
<text x="1200" y="321.0" font-size="6" fill="#0046b4" text-anchor="start" font-weight="bold" font-style="normal" font-family="Liberation Sans" textLength="54" lengthAdjust="spacingAndGlyphs" >IDENTIFICATION PR NO. :</text>
<text x="1269" y="320.5" font-size="6" fill="#ff0000" text-anchor="start" font-weight="bold" font-style="normal" font-family="Liberation Sans" textLength="16" lengthAdjust="spacingAndGlyphs" >XXXXXX</text>
<text x="1309" y="317.5" font-size="5" fill="#0046b4" text-anchor="start" font-weight="bold" font-style="normal" font-family="Liberation Sans" textLength="100" lengthAdjust="spacingAndGlyphs" >Consulting Engineer registered signature/date</text>
<text x="1200" y="334.5" font-size="8.5" fill="#ff0000" text-anchor="start" font-weight="bold" font-style="normal" font-family="Liberation Sans" textLength="151" lengthAdjust="spacingAndGlyphs" >CONSULTANT ENDORSEMENT OF HVAC COMPLIANCE</text>
<text x="1200" y="345.3" font-size="7" fill="#0046b4" text-anchor="start" font-weight="bold" font-style="normal" font-family="Liberation Sans" textLength="213" lengthAdjust="spacingAndGlyphs" >"I, SAMER ABDULLAH AL SHAHAT  (Mechanical Engineer) Identification UPDA</text>
<text x="1200" y="353.3" font-size="7" fill="#0046b4" text-anchor="start" font-weight="bold" font-style="normal" font-family="Liberation Sans" textLength="213" lengthAdjust="spacingAndGlyphs" >certificate no. 1895 and Identification ID No. 27161304439, being a cons-</text>
<text x="1200" y="361.3" font-size="7" fill="#0046b4" text-anchor="start" font-weight="bold" font-style="normal" font-family="Liberation Sans" textLength="213" lengthAdjust="spacingAndGlyphs" >ultant, hereby certify that the proposed  HVAC SYSTEM  has been designed</text>
<text x="1200" y="369.8" font-size="7" fill="#0046b4" text-anchor="start" font-weight="bold" font-style="normal" font-family="Liberation Sans" textLength="100" lengthAdjust="spacingAndGlyphs" >in accordance with the provisions of :</text>
<text x="1200" y="380.3" font-size="7" fill="#0046b4" text-anchor="start" font-weight="bold" font-style="normal" font-family="Liberation Sans" textLength="200" lengthAdjust="spacingAndGlyphs" >NFPA 101 - Code for safety to life from fire in Building &amp; Structure</text>
<text x="1200" y="388.3" font-size="7" fill="#0046b4" text-anchor="start" font-weight="bold" font-style="normal" font-family="Liberation Sans" textLength="186" lengthAdjust="spacingAndGlyphs" >NFPA 90A - Standard for Installation of AC &amp; Ventilation System</text>
<text x="1200" y="396.3" font-size="7" fill="#0046b4" text-anchor="start" font-weight="bold" font-style="normal" font-family="Liberation Sans" textLength="140" lengthAdjust="spacingAndGlyphs" >NFPA 92A - Standard for Smoke Control System</text>
<path d="M1209,346.3 L1290,346.3 M1316,362.3 L1354,362.3" stroke="#0046b4" stroke-width="0.6"/>
<text x="1278" y="439.5" font-size="6.5" fill="#ff0000" text-anchor="start" font-weight="bold" font-style="normal" font-family="Liberation Sans" textLength="55" lengthAdjust="spacingAndGlyphs" >(consultant's signature)</text>
<text x="1200" y="454.0" font-size="5.5" fill="#0046b4" text-anchor="start" font-weight="bold" font-style="normal" font-family="Liberation Sans" textLength="72" lengthAdjust="spacingAndGlyphs" >UPDA REGISTER No. / GRADE :</text><text x="1278" y="454.0" font-size="5.5" fill="#ff0000" text-anchor="start" font-weight="bold" font-style="normal" font-family="Liberation Sans" textLength="21" lengthAdjust="spacingAndGlyphs" >XXXX / A</text><text x="1310" y="454.0" font-size="5.5" fill="#0046b4" text-anchor="start" font-weight="bold" font-style="normal" font-family="Liberation Sans" textLength="53" lengthAdjust="spacingAndGlyphs" >Engineer's ID No.  :</text><text x="1379" y="454.0" font-size="5.5" fill="#ff0000" text-anchor="start" font-weight="bold" font-style="normal" font-family="Liberation Sans" textLength="29" lengthAdjust="spacingAndGlyphs" >XXXXXXXXXX</text><text x="1200" y="467.5" font-size="5.5" fill="#0046b4" text-anchor="start" font-weight="bold" font-style="normal" font-family="Liberation Sans" textLength="35" lengthAdjust="spacingAndGlyphs" >UPDA VALIDITY</text><text x="1277" y="467.5" font-size="5.5" fill="#ff0000" text-anchor="start" font-weight="bold" font-style="normal" font-family="Liberation Sans" textLength="23" lengthAdjust="spacingAndGlyphs" >XX-XX-XX</text><text x="1311" y="467.5" font-size="5.5" fill="#0046b4" text-anchor="start" font-weight="bold" font-style="normal" font-family="Liberation Sans" textLength="27" lengthAdjust="spacingAndGlyphs" >ID VALIDITY</text><text x="1380" y="467.5" font-size="5.5" fill="#ff0000" text-anchor="start" font-weight="bold" font-style="normal" font-family="Liberation Sans" textLength="22" lengthAdjust="spacingAndGlyphs" >XX-XX-XX</text>
<text x="1201" y="482.3" font-size="6" fill="#ff00ff" text-anchor="start" font-weight="normal" font-style="normal" font-family="Liberation Sans" textLength="32" lengthAdjust="spacingAndGlyphs" >CONSULTANT</text>
<rect x="1222.5" y="499" width="51.5" height="51.5" fill="none" stroke="#ff0000" stroke-width="1.8"/>
<g fill="#ff0000" stroke="#ffffff" stroke-width="0.7" fill-rule="evenodd"><path d="M1232,502 L1237,502 L1237,518 Q1237,519.5 1238.5,519.5 L1241.5,519.5 Q1242.5,519.5 1242.5,518 L1242.5,502 L1248,502 L1248,519 Q1248,524 1243,524 L1237,524 Q1232,524 1232,519 Z"/><path d="M1237,513 L1248,513 Q1254,513 1254,519 L1254,529 Q1254,535 1248,535 L1237,535 Z M1241,517 L1247,517 Q1250,517 1250,520 L1250,528 Q1250,531 1247,531 L1241,531 Z"/><path d="M1261,524 L1248,524 Q1242,524 1242,530 L1242,540 Q1242,546 1248,546 L1261,546 L1261,540 L1249,540 Q1247.5,540 1247.5,538.5 L1247.5,531.5 Q1247.5,530 1249,530 L1261,530 Z"/></g>
<text x="1285" y="508.8" font-size="12" fill="#0000ff" text-anchor="start" font-weight="bold" font-style="normal" font-family="Liberation Serif" textLength="98" lengthAdjust="spacingAndGlyphs" >المركز العالمي للتصميم</text>
<text x="1285" y="520.3" font-size="9.5" fill="#0000ff" text-anchor="start" font-weight="bold" font-style="normal" font-family="Liberation Serif" textLength="99" lengthAdjust="spacingAndGlyphs" >UNIVERSAL  DESIGN</text>
<text x="1315" y="532.3" font-size="9.5" fill="#0000ff" text-anchor="start" font-weight="bold" font-style="normal" font-family="Liberation Serif" textLength="39" lengthAdjust="spacingAndGlyphs" >CENTER</text>
<text x="1285" y="540.3" font-size="6.5" fill="#0000ff" text-anchor="start" font-weight="normal" font-style="normal" font-family="Liberation Serif" textLength="99" lengthAdjust="spacingAndGlyphs" >Architects,Engineers,Consultants.</text>
<text x="1285" y="546.8" font-size="4" fill="#0000ff" text-anchor="start" font-weight="bold" font-style="normal" font-family="Liberation Sans" textLength="108" lengthAdjust="spacingAndGlyphs" >P.O. Box 12470, TEL: 44531990, FAX:44531990</text>
<text x="1296" y="552.3" font-size="4" fill="#0000ff" text-anchor="start" font-weight="bold" font-style="normal" font-family="Liberation Sans" textLength="76" lengthAdjust="spacingAndGlyphs" >E-mail address: udc12@yahoo.com</text>
<text x="1274" y="586.8" font-size="6.5" fill="#ff0000" text-anchor="start" font-weight="bold" font-style="normal" font-family="Liberation Sans" textLength="61" lengthAdjust="spacingAndGlyphs" >(head of office signature)</text>
<text x="1200" y="599.3" font-size="5.5" fill="#0046b4" text-anchor="start" font-weight="bold" font-style="normal" font-family="Liberation Sans" textLength="72" lengthAdjust="spacingAndGlyphs" >UPDA REGISTER No. / GRADE :</text><text x="1278" y="599.3" font-size="5.5" fill="#ff0000" text-anchor="start" font-weight="bold" font-style="normal" font-family="Liberation Sans" textLength="21" lengthAdjust="spacingAndGlyphs" >XXXX / A</text><text x="1310" y="599.3" font-size="5.5" fill="#0046b4" text-anchor="start" font-weight="bold" font-style="normal" font-family="Liberation Sans" textLength="53" lengthAdjust="spacingAndGlyphs" >Engineer's ID No.  :</text><text x="1379" y="599.3" font-size="5.5" fill="#ff0000" text-anchor="start" font-weight="bold" font-style="normal" font-family="Liberation Sans" textLength="29" lengthAdjust="spacingAndGlyphs" >XXXXXXXXXX</text><text x="1200" y="612.8" font-size="5.5" fill="#0046b4" text-anchor="start" font-weight="bold" font-style="normal" font-family="Liberation Sans" textLength="35" lengthAdjust="spacingAndGlyphs" >UPDA VALIDITY</text><text x="1277" y="612.8" font-size="5.5" fill="#ff0000" text-anchor="start" font-weight="bold" font-style="normal" font-family="Liberation Sans" textLength="23" lengthAdjust="spacingAndGlyphs" >XX-XX-XX</text><text x="1311" y="612.8" font-size="5.5" fill="#0046b4" text-anchor="start" font-weight="bold" font-style="normal" font-family="Liberation Sans" textLength="27" lengthAdjust="spacingAndGlyphs" >ID VALIDITY</text><text x="1380" y="612.8" font-size="5.5" fill="#ff0000" text-anchor="start" font-weight="bold" font-style="normal" font-family="Liberation Sans" textLength="22" lengthAdjust="spacingAndGlyphs" >XX-XX-XX</text>
<text x="1201" y="622.8" font-size="6" fill="#ff00ff" text-anchor="start" font-weight="normal" font-style="normal" font-family="Liberation Sans" textLength="51" lengthAdjust="spacingAndGlyphs" >CONSULTANT  CLIENT</text>
<path d="M1217.5,648 L1217.5,630 L1222,630 L1224.5,641 L1227,630 L1231.5,630 L1231.5,648 M1224.5,641 L1224.5,659 M1217.5,650 L1217.5,659 L1221,659 L1221,650 M1228,650 L1228,659 L1231.5,659 L1231.5,650 M1215.5,661.5 L1250,661.5 M1241,629 L1247,629 L1247,640 L1241,640 M1241,645 L1247,645 L1247,658 L1244,658 M1247,650 L1252,650 L1252,660 L1244,660" stroke="#000" stroke-width="3.2" fill="none" stroke-linejoin="miter"/>
<path d="M1217.5,648 L1217.5,630 L1222,630 L1224.5,641 L1227,630 L1231.5,630 L1231.5,648 M1224.5,641 L1224.5,659 M1217.5,650 L1217.5,659 L1221,659 L1221,650 M1228,650 L1228,659 L1231.5,659 L1231.5,650 M1215.5,661.5 L1250,661.5 M1241,629 L1247,629 L1247,640 L1241,640 M1241,645 L1247,645 L1247,658 L1244,658 M1247,650 L1252,650 L1252,660 L1244,660" stroke="#fff" stroke-width="1.1" fill="none" stroke-linejoin="miter"/>
<path d="M1235.5,626 L1235.5,691 M1238.5,627 L1238.5,691" stroke="#000" stroke-width="1.1"/>
<text x="1263" y="654.8" font-size="12" fill="#000" text-anchor="start" font-weight="bold" font-style="normal" font-family="Liberation Serif" textLength="98" lengthAdjust="spacingAndGlyphs" >آل صرايع للاستشارات الهندسية</text>
<g fill="none" stroke="#000" stroke-width="1.3"><rect x="1361.5" y="643.5" width="30" height="14"/><path d="M1257,658.5 L1391,658.5 M1355,659.5 L1355,691 M1240,673.5 L1355,673.5 M1240,691 L1392,691 M1392,659 L1392,691"/></g>
<g fill="#000"><rect x="1364" y="646" width="24" height="3"/><rect x="1364" y="651" width="14" height="4"/><rect x="1382" y="651" width="5" height="4"/><rect x="1358" y="663" width="22" height="3"/><rect x="1358" y="668" width="21" height="3"/><rect x="1358" y="673" width="20" height="3"/><rect x="1358" y="678" width="20" height="3"/><rect x="1358" y="683" width="11" height="3"/><rect x="1358" y="687" width="33" height="2"/><rect x="1240" y="679" width="20" height="4"/><rect x="1262" y="679" width="88" height="4"/><rect x="1340" y="680" width="10" height="4"/><rect x="1279" y="685" width="37" height="3"/></g>
<text x="1257" y="666.3" font-size="7" fill="#333" text-anchor="start" font-weight="normal" font-style="normal" font-family="Liberation Serif" textLength="40" lengthAdjust="spacingAndGlyphs" >AL-SRAIYA</text>
<text x="1300" y="666.3" font-size="4.5" fill="#333" text-anchor="start" font-weight="normal" font-style="normal" font-family="Liberation Serif" textLength="50" lengthAdjust="spacingAndGlyphs" >Engineering Consultants</text>
<text x="1200" y="701.8" font-size="7" fill="#ff00ff" text-anchor="start" font-weight="normal" font-style="normal" font-family="Liberation Serif" textLength="38" lengthAdjust="spacingAndGlyphs" >DEVELOPER</text>
<rect x="1200" y="706.5" width="60.5" height="48" fill="none" stroke="#000" stroke-width="1.1"/>
<g stroke="#b8b8b8" stroke-width="0.7" fill="none"><path d="M1229,713 L1229,743 M1229,719.0 L1224.0,716.0 M1229,719.0 L1234.0,716.0 M1229,722.6 L1222.4,719.6 M1229,722.6 L1235.6,719.6 M1229,726.2 L1220.8,723.2 M1229,726.2 L1237.2,723.2 M1229,729.8 L1219.2,726.8 M1229,729.8 L1238.8,726.8 M1229,733.4 L1220.8,730.4 M1229,733.4 L1237.2,730.4 M1229,737.0 L1222.4,734.0 M1229,737.0 L1235.6,734.0 M1229,740.6 L1224.0,737.6 M1229,740.6 L1234.0,737.6 M1212,746.5 L1245,746.5"/></g><g fill="#d8a050"><circle cx="1226" cy="728" r="0.8"/><circle cx="1231" cy="733" r="0.8"/><circle cx="1228" cy="738" r="0.8"/></g>
<text x="1265" y="723.3" font-size="8.5" fill="#111" text-anchor="start" font-weight="bold" font-style="normal" font-family="Liberation Sans" textLength="142" lengthAdjust="spacingAndGlyphs" >LUSAIL ADMINISTRATION COMPLEX</text>
<text x="1295" y="733.3" font-size="8.5" fill="#111" text-anchor="start" font-weight="bold" font-style="normal" font-family="Liberation Sans" textLength="80" lengthAdjust="spacingAndGlyphs" >LUSAIL REAL STATE</text>
<text x="1284" y="742.8" font-size="8.5" fill="#111" text-anchor="start" font-weight="bold" font-style="normal" font-family="Liberation Sans" textLength="103" lengthAdjust="spacingAndGlyphs" >DEVELOPMENT COMPANY</text>
<text x="1201" y="771.8" font-size="5.5" fill="#ff00ff" text-anchor="start" font-weight="normal" font-style="normal" font-family="Liberation Sans" textLength="35" lengthAdjust="spacingAndGlyphs" >CLIENT/OWNER</text>
<text x="1238" y="784.3" font-size="8.5" fill="#00e600" text-anchor="start" font-weight="bold" font-style="normal" font-family="Liberation Serif" textLength="134" lengthAdjust="spacingAndGlyphs" >NASSER RASHID SURAIYA AL KAABI.</text>
<text x="1201" y="803.3" font-size="5.5" fill="#ff00ff" text-anchor="start" font-weight="normal" font-style="normal" font-family="Liberation Sans" textLength="44" lengthAdjust="spacingAndGlyphs" >NAME OF PROJECT</text>
<text x="1204" y="815.8" font-size="9" fill="#00e600" text-anchor="start" font-weight="bold" font-style="normal" font-family="Liberation Serif" textLength="205" lengthAdjust="spacingAndGlyphs" >RESIDENTIAL TOWER ( 2B + G + M + 16 FLOORS )</text>
<text x="1200" y="834.3" font-size="5.5" fill="#0046b4" text-anchor="start" font-weight="bold" font-style="normal" font-family="Liberation Sans" textLength="25" lengthAdjust="spacingAndGlyphs" >LOCATION :</text>
<text x="1246" y="833.8" font-size="5.5" fill="#ff0000" text-anchor="start" font-weight="bold" font-style="normal" font-family="Liberation Sans" textLength="38" lengthAdjust="spacingAndGlyphs" >MARINA DISTRICT</text>
<text x="1308" y="834.3" font-size="5.5" fill="#0046b4" text-anchor="start" font-weight="bold" font-style="normal" font-family="Liberation Sans" textLength="22" lengthAdjust="spacingAndGlyphs" >PIN NO. :</text>
<text x="1360" y="834.3" font-size="5.5" fill="#ff0000" text-anchor="start" font-weight="bold" font-style="normal" font-family="Liberation Sans" textLength="29" lengthAdjust="spacingAndGlyphs" >XXXXXXXXXX</text>
<text x="1199" y="846.8" font-size="5.5" fill="#0046b4" text-anchor="start" font-weight="bold" font-style="normal" font-family="Liberation Sans" textLength="14" lengthAdjust="spacingAndGlyphs" >AREA :</text>
<text x="1217" y="847.3" font-size="5.5" fill="#ff0000" text-anchor="start" font-weight="bold" font-style="normal" font-family="Liberation Sans" textLength="23" lengthAdjust="spacingAndGlyphs" >XXXXXXXX</text>
<text x="1272" y="846.8" font-size="5.5" fill="#0046b4" text-anchor="start" font-weight="bold" font-style="normal" font-family="Liberation Sans" textLength="20" lengthAdjust="spacingAndGlyphs" >STREET :</text>
<text x="1296" y="847.3" font-size="5.5" fill="#ff0000" text-anchor="start" font-weight="bold" font-style="normal" font-family="Liberation Sans" textLength="18" lengthAdjust="spacingAndGlyphs" >XXXXXX</text>
<text x="1345" y="846.8" font-size="5.5" fill="#0046b4" text-anchor="start" font-weight="bold" font-style="normal" font-family="Liberation Sans" textLength="25" lengthAdjust="spacingAndGlyphs" >PLOT NO. :</text>
<text x="1372" y="847.3" font-size="5.5" fill="#ff0000" text-anchor="start" font-weight="bold" font-style="normal" font-family="Liberation Sans" textLength="38" lengthAdjust="spacingAndGlyphs" >MARINA-XXXX-X-XX</text>
<text x="1201" y="857.8" font-size="5.5" fill="#ff00ff" text-anchor="start" font-weight="normal" font-style="normal" font-family="Liberation Sans" textLength="16" lengthAdjust="spacingAndGlyphs" >TITTLE</text>
<text x="1261" y="874.3" font-size="8" fill="#0000ff" text-anchor="start" font-weight="bold" font-style="normal" font-family="Liberation Serif" textLength="85" lengthAdjust="spacingAndGlyphs" >CHILLED WATER RISER</text>
<text x="1272" y="886.8" font-size="9.5" fill="#ff0000" text-anchor="start" font-weight="bold" font-style="normal" font-family="Liberation Serif" textLength="66" lengthAdjust="spacingAndGlyphs" >HVAC LAYOUT</text>
<text x="1202" y="904.3" font-size="5.5" fill="#ff00ff" text-anchor="start" font-weight="normal" font-style="normal" font-family="Liberation Sans" textLength="26" lengthAdjust="spacingAndGlyphs" >DRAWN BY</text>
<text x="1260" y="904.8" font-size="5.5" fill="#00e600" text-anchor="start" font-weight="bold" font-style="normal" font-family="Liberation Sans" textLength="19" lengthAdjust="spacingAndGlyphs" >W.P.A.</text>
<text x="1314" y="904.3" font-size="5.5" fill="#ff00ff" text-anchor="start" font-weight="normal" font-style="normal" font-family="Liberation Sans" textLength="15" lengthAdjust="spacingAndGlyphs" >SCALE</text>
<text x="1368" y="904.8" font-size="5.5" fill="#00e600" text-anchor="start" font-weight="bold" font-style="normal" font-family="Liberation Sans" textLength="12" lengthAdjust="spacingAndGlyphs" >NTS</text>
<text x="1202" y="922.3" font-size="5.5" fill="#ff00ff" text-anchor="start" font-weight="normal" font-style="normal" font-family="Liberation Sans" textLength="26" lengthAdjust="spacingAndGlyphs" >DESIGN BY</text>
<text x="1260" y="922.8" font-size="5.5" fill="#00e600" text-anchor="start" font-weight="bold" font-style="normal" font-family="Liberation Sans" textLength="22" lengthAdjust="spacingAndGlyphs" >S.A.A.S</text>
<text x="1314" y="922.3" font-size="5.5" fill="#ff00ff" text-anchor="start" font-weight="normal" font-style="normal" font-family="Liberation Sans" textLength="12" lengthAdjust="spacingAndGlyphs" >DATE</text>
<text x="1368" y="922.8" font-size="5.5" fill="#00e600" text-anchor="start" font-weight="bold" font-style="normal" font-family="Liberation Sans" textLength="32" lengthAdjust="spacingAndGlyphs" >14 JAN 2012</text>
<text x="1202" y="939.3" font-size="5.5" fill="#ff00ff" text-anchor="start" font-weight="normal" font-style="normal" font-family="Liberation Sans" textLength="24" lengthAdjust="spacingAndGlyphs" >CHECK BY</text>
<text x="1260" y="939.8" font-size="5.5" fill="#00e600" text-anchor="start" font-weight="bold" font-style="normal" font-family="Liberation Sans" textLength="22" lengthAdjust="spacingAndGlyphs" >S.A.A.S</text>
<text x="1314" y="939.3" font-size="5.5" fill="#ff00ff" text-anchor="start" font-weight="normal" font-style="normal" font-family="Liberation Sans" textLength="30" lengthAdjust="spacingAndGlyphs" >JOB NUMBER</text>
<text x="1368" y="939.8" font-size="5.5" fill="#00e600" text-anchor="start" font-weight="bold" font-style="normal" font-family="Liberation Sans" textLength="38" lengthAdjust="spacingAndGlyphs" >UDC 12-10-02</text>
<text x="1202" y="963.8" font-size="5.5" fill="#ff00ff" text-anchor="start" font-weight="normal" font-style="normal" font-family="Liberation Sans" textLength="32" lengthAdjust="spacingAndGlyphs" >DRAWING NO.</text>
<text x="1252" y="968.3" font-size="11.5" fill="#0000ff" text-anchor="start" font-weight="bold" font-style="normal" font-family="Liberation Sans" textLength="48" lengthAdjust="spacingAndGlyphs" >HVAC-26</text>
<text x="1314" y="956.8" font-size="5.5" fill="#ff00ff" text-anchor="start" font-weight="normal" font-style="normal" font-family="Liberation Sans" textLength="31" lengthAdjust="spacingAndGlyphs" >REVISION NO.</text>
<text x="1368" y="957.8" font-size="9" fill="#00e600" text-anchor="start" font-weight="bold" font-style="normal" font-family="Liberation Sans" textLength="11" lengthAdjust="spacingAndGlyphs" >00</text>
<text x="1313" y="969.8" font-size="5.5" fill="#ff00ff" text-anchor="start" font-weight="normal" font-style="normal" font-family="Liberation Sans" textLength="26" lengthAdjust="spacingAndGlyphs" >FILE NAME:</text>
<rect x="1313" y="973" width="80" height="4" fill="#000"/>
<rect x="776" y="903" width="403" height="29.5" rx="2" fill="#7a7a7a" fill-opacity="0.88"/>
<text x="778" y="915" font-size="11.7" fill="#ffffff" font-family="Liberation Mono" textLength="398" lengthAdjust="spacingAndGlyphs">Autodesk DWG.  This file is a TrustedDWG last saved by an</text>
<text x="778" y="929" font-size="11.7" fill="#ffffff" font-family="Liberation Mono" textLength="377" lengthAdjust="spacingAndGlyphs">Autodesk application or Autodesk licensed application.</text>
<rect x="776" y="938" width="60" height="14.5" rx="2" fill="#5e5e5e" fill-opacity="0.92"/>
<rect x="776" y="958.5" width="60" height="14" rx="2" fill="#5e5e5e" fill-opacity="0.92"/>
<text x="778" y="950" font-size="11.7" fill="#ffffff" font-family="Liberation Mono" textLength="56" lengthAdjust="spacingAndGlyphs">Command:</text>
<text x="778" y="970" font-size="11.7" fill="#ffffff" font-family="Liberation Mono" textLength="56" lengthAdjust="spacingAndGlyphs">Command:</text>
<rect x="714.5" y="976.5" width="491" height="25" rx="2" fill="#e8e8e8" fill-opacity="0.3" stroke="#8a8a8a" stroke-width="1"/>
<rect x="715" y="977" width="55" height="24" fill="#5a5a5a" fill-opacity="0.85"/>
<g fill="#9a9a9a"><rect x="719" y="980" width="1.5" height="1.5"/><rect x="722" y="980" width="1.5" height="1.5"/><rect x="719" y="984" width="1.5" height="1.5"/><rect x="722" y="984" width="1.5" height="1.5"/><rect x="719" y="988" width="1.5" height="1.5"/><rect x="722" y="988" width="1.5" height="1.5"/><rect x="719" y="992" width="1.5" height="1.5"/><rect x="722" y="992" width="1.5" height="1.5"/><rect x="719" y="996" width="1.5" height="1.5"/><rect x="722" y="996" width="1.5" height="1.5"/></g>
<path d="M730.5,985.5 L737.5,992.5 M737.5,985.5 L730.5,992.5" stroke="#f0f0f0" stroke-width="1.5"/>
<path d="M750,997 L757,990 M757,990 Q755,985 760,983.5 L758.5,986.5 L760.5,988.5 L763.5,987 Q762,992 757,990" stroke="#e8e8e8" stroke-width="1.3" fill="none"/>
<rect x="770" y="977" width="425" height="24" fill="#ffffff" fill-opacity="0.55"/>
<rect x="775.5" y="983.5" width="16" height="12" fill="none" stroke="#555" stroke-width="1"/><path d="M778,986 L781,988.5 L778,991 M782,992.5 L786,992.5" stroke="#555" stroke-width="0.9" fill="none"/><path d="M794.5,987.0 L799.5,987.0 L797,990.0 Z" fill="#777"/>
<text x="807" y="993" font-size="12" fill="#9a9a9a" font-family="Liberation Mono" font-style="italic" textLength="97" lengthAdjust="spacingAndGlyphs">Type a command</text>
<rect x="1195" y="981" width="10" height="16" fill="#b0b0b0"/><path d="M1194.5,991 L1198.5,986.5 L1202.5,991 Z" fill="#222"/>
<rect x="0" y="1003" width="1917" height="23" fill="#3a3a3a"/>
<defs><linearGradient id="lt" x1="0" y1="0" x2="0" y2="1"><stop offset="0" stop-color="#5a5a5a"/><stop offset="1" stop-color="#4e4e4e"/></linearGradient><linearGradient id="lta" x1="0" y1="0" x2="0" y2="1"><stop offset="0" stop-color="#6a6a6a"/><stop offset="1" stop-color="#868686"/></linearGradient></defs>
<path d="M6,1003 C11,1003 12,1005 14,1012 Q16,1020.5 21,1020.5 L59,1020.5 Q64,1020.5 66,1012 C68,1005 69,1003 74,1003 Z" fill="url(#lt)" stroke="#2e2e2e" stroke-width="0.6"/>
<path d="M137,1003 C142,1003 143,1005 145,1012 Q147,1020.5 152,1020.5 L202,1020.5 Q207,1020.5 209,1012 C211,1005 212,1003 217,1003 Z" fill="url(#lt)" stroke="#2e2e2e" stroke-width="0.6"/>
<path d="M208,1003 C213,1003 214,1005 216,1012 Q218,1020.5 223,1020.5 L273,1020.5 Q278,1020.5 280,1012 C282,1005 283,1003 288,1003 Z" fill="url(#lt)" stroke="#2e2e2e" stroke-width="0.6"/>
<path d="M279,1003 C284,1003 285,1005 287,1012 Q289,1020.5 294,1020.5 L344,1020.5 Q349,1020.5 351,1012 C353,1005 354,1003 359,1003 Z" fill="url(#lt)" stroke="#2e2e2e" stroke-width="0.6"/>
<path d="M350,1003 C355,1003 356,1005 358,1012 Q360,1020.5 365,1020.5 L415,1020.5 Q420,1020.5 422,1012 C424,1005 425,1003 430,1003 Z" fill="url(#lt)" stroke="#2e2e2e" stroke-width="0.6"/>
<path d="M65,1003 C70,1003 71,1005 73,1012 Q75,1020.5 80,1020.5 L130,1020.5 Q135,1020.5 137,1012 C139,1005 140,1003 145,1003 Z" fill="url(#lta)" stroke="#2e2e2e" stroke-width="0.6"/>
<text x="23" y="1016" font-size="12.5" fill="#c4c4c4" text-anchor="start" font-weight="normal" font-style="normal" font-family="Liberation Sans" textLength="34" lengthAdjust="spacingAndGlyphs" >Model</text>
<text x="80" y="1016" font-size="12.5" fill="#ffffff" text-anchor="start" font-weight="bold" font-style="normal" font-family="Liberation Sans" textLength="50" lengthAdjust="spacingAndGlyphs" >HVAC-26</text>
<text x="153" y="1016" font-size="12.5" fill="#c4c4c4" text-anchor="start" font-weight="normal" font-style="normal" font-family="Liberation Sans" textLength="48" lengthAdjust="spacingAndGlyphs" >HVAC-27</text>
<text x="224" y="1016" font-size="12.5" fill="#c4c4c4" text-anchor="start" font-weight="normal" font-style="normal" font-family="Liberation Sans" textLength="48" lengthAdjust="spacingAndGlyphs" >HVAC-28</text>
<text x="295" y="1016" font-size="12.5" fill="#c4c4c4" text-anchor="start" font-weight="normal" font-style="normal" font-family="Liberation Sans" textLength="48" lengthAdjust="spacingAndGlyphs" >HVAC-29</text>
<text x="366" y="1016" font-size="12.5" fill="#c4c4c4" text-anchor="start" font-weight="normal" font-style="normal" font-family="Liberation Sans" textLength="48" lengthAdjust="spacingAndGlyphs" >HVAC-30</text>
<path d="M430,1003 L452,1003 Q449,1020 441,1020.5 L430,1020.5 Q426,1020 430,1003 Z" fill="#505050" stroke="#2e2e2e" stroke-width="0.6"/>
<path d="M435.5,1011.5 L444.5,1011.5 M440,1007 L440,1016" stroke="#d0d0d0" stroke-width="1.8"/>
<rect x="1409.5" y="1004.5" width="41" height="22" fill="#474747" stroke="#5e5e5e" stroke-width="1"/>
<rect x="1453.5" y="1004.5" width="101" height="22" fill="#474747" stroke="#5e5e5e" stroke-width="1"/>
<rect x="1556.5" y="1004.5" width="63" height="22" fill="#474747" stroke="#5e5e5e" stroke-width="1"/>
<rect x="1621.5" y="1004.5" width="73" height="22" fill="#474747" stroke="#5e5e5e" stroke-width="1"/>
<rect x="1696.5" y="1004.5" width="39" height="22" fill="#474747" stroke="#5e5e5e" stroke-width="1"/>
<rect x="1737.5" y="1004.5" width="24" height="22" fill="#474747" stroke="#5e5e5e" stroke-width="1"/>
<rect x="1763.5" y="1004.5" width="25" height="22" fill="#474747" stroke="#5e5e5e" stroke-width="1"/>
<rect x="1790.5" y="1004.5" width="77" height="22" fill="#474747" stroke="#5e5e5e" stroke-width="1"/>
<rect x="1869.5" y="1004.5" width="47" height="22" fill="#474747" stroke="#5e5e5e" stroke-width="1"/>
<text x="1413" y="1021" font-size="12.5" fill="#f4f4f4" text-anchor="start" font-weight="normal" font-style="normal" font-family="Liberation Sans" textLength="34" lengthAdjust="spacingAndGlyphs" >PAPER</text>
<rect x="1454" y="1006" width="22" height="20" fill="#5b8abf"/>
<rect x="1557" y="1006" width="22" height="20" fill="#5b8abf"/>
<rect x="1581" y="1006" width="22" height="20" fill="#5b8abf"/>
<path d="M1457.5,1010 L1457.5,1024.5 L1473,1024.5 M1457.5,1020.5 L1462,1020.5 L1462,1024.5" stroke="#e8e8e8" stroke-width="1.2" fill="none"/>
<circle cx="1488" cy="1017.5" r="6" stroke="#e8e8e8" stroke-width="1.2" fill="none"/><path d="M1487,1017.5 L1497,1017.5 M1487,1017.5 L1493,1010.5" stroke="#e8e8e8" stroke-width="1.2"/><path d="M1505.0,1014.5 L1512.0,1014.5 L1508.5,1018.5 Z" fill="#e8e8e8"/>
<path d="M1521,1009 L1534,1023" stroke="#e04848" stroke-width="1.2"/><path d="M1527.5,1009 L1527.5,1026" stroke="#40d040" stroke-width="1.2"/><rect x="1526" y="1015" width="3" height="3" fill="#444" stroke="#fff" stroke-width="0.7"/><path d="M1544.0,1014.5 L1551.0,1014.5 L1547.5,1018.5 Z" fill="#e8e8e8"/>
<path d="M1561,1023.5 L1571,1014 M1561,1023.5 L1576,1023.5" stroke="#e8e8e8" stroke-width="1.3"/><rect x="1565.5" y="1016.5" width="2.5" height="2.5" fill="#e8e8e8"/>
<rect x="1588.5" y="1012.5" width="12" height="12.5" stroke="#e8e8e8" stroke-width="1.2" fill="none"/><rect x="1584.5" y="1009.5" width="4" height="4" stroke="#e8e8e8" fill="none"/><path d="M1608.0,1014.5 L1615.0,1014.5 L1611.5,1018.5 Z" fill="#e8e8e8"/>
<g stroke="#e8e8e8" stroke-width="1.1" fill="none"><rect x="1631.5" y="1015.5" width="6" height="6"/><path d="M1626.5,1017 L1626.5,1025.5 L1630,1025.5 M1634,1025.5 L1641.5,1025.5 L1641.5,1018 M1641.5,1014 L1641.5,1009.5 L1636,1009.5 M1632,1009.5 L1630,1009.5" stroke-dasharray="2,1.5"/><path d="M1634,1015 L1627,1009 M1627,1009 L1627,1013 M1627,1009 L1631,1009"/></g>
<path d="M1649,1026 L1654,1011 L1659,1026 L1654,1021 Z" fill="#e8e8e8"/><circle cx="1663" cy="1013" r="2.6" stroke="#e8e8e8" fill="none" stroke-width="1.1"/>
<path d="M1675,1026 L1680,1011 L1685,1026 L1680,1021 Z" fill="#e8e8e8"/><path d="M1688,1009 L1684,1014 L1687,1014 L1684,1019" stroke="#e8e8e8" fill="none" stroke-width="1.1"/>
<path d="M1715.64,1014.98 L1715.64,1018.02 L1713.58,1017.63 L1712.89,1019.29 L1714.62,1020.48 L1712.48,1022.62 L1711.29,1020.89 L1709.63,1021.58 L1710.02,1023.64 L1706.98,1023.64 L1707.37,1021.58 L1705.71,1020.89 L1704.52,1022.62 L1702.38,1020.48 L1704.11,1019.29 L1703.42,1017.63 L1701.36,1018.02 L1701.36,1014.98 L1703.42,1015.37 L1704.11,1013.71 L1702.38,1012.52 L1704.52,1010.38 L1705.71,1012.11 L1707.37,1011.42 L1706.98,1009.36 L1710.02,1009.36 L1709.63,1011.42 L1711.29,1012.11 L1712.48,1010.38 L1714.62,1012.52 L1712.89,1013.71 L1713.58,1015.37 Z" fill="#d4d4d4"/><circle cx="1708.5" cy="1016.5" r="2.4" fill="#474747"/><path d="M1725.0,1014.5 L1732.0,1014.5 L1728.5,1018.5 Z" fill="#e8e8e8"/>
<path d="M1741,1016.5 L1757,1016.5 M1749,1009 L1749,1025" stroke="#e8e8e8" stroke-width="1.6"/>
<g stroke="#e8e8e8" fill="none" stroke-width="1.1"><rect x="1768.5" y="1009.5" width="5.5" height="5.5"/><circle cx="1780.5" cy="1015.5" r="3.2"/><path d="M1772,1025.5 L1775.5,1019 L1779,1025.5 Z"/></g>
<rect x="1795" y="1010" width="11" height="15" fill="#5ab0f0"/><rect x="1795" y="1021" width="6" height="4" fill="#f0c040"/><path d="M1795,1015 L1806,1015 M1800.5,1010 L1800.5,1025" stroke="#e8e8e8" stroke-width="0.8"/><path d="M1803,1022 L1806,1025 L1810,1019" stroke="#5ab0f0" stroke-width="1.2" fill="none"/>
<g stroke="#e8e8e8" fill="none" stroke-width="1.1"><path d="M1818.5,1017 L1818.5,1012 Q1818.5,1009.5 1820.5,1009.5 Q1822.5,1009.5 1822.5,1012 L1822.5,1017 Q1822.5,1019 1820.5,1019 Q1818.5,1019 1818.5,1017 Z"/><path d="M1817.5,1020 L1817.5,1024.5 L1821,1024.5 M1824,1012 L1828,1012 L1831,1016"/></g><path d="M1827,1026 L1831,1018.5 L1835,1026 Z" fill="#e0a050"/>
<g stroke="#e8e8e8" fill="none" stroke-width="1"><path d="M1845,1014.5 L1849,1010 L1860,1010 L1856,1014.5 Z M1845,1018 L1848,1015 M1845,1021 L1848,1018 M1845,1024 L1848,1021"/></g><path d="M1851,1026 L1855.5,1018.5 L1860,1026 Z" fill="#e0a050"/>
<g stroke="#e8e8e8" stroke-width="1.2" fill="none"><rect x="1874.5" y="1010.5" width="15" height="12"/><path d="M1877.5,1020 L1881,1016.5 M1877.5,1020 L1877.5,1017 M1877.5,1020 L1880.5,1020 M1886.5,1013 L1883,1016.5 M1886.5,1013 L1883.5,1013 M1886.5,1013 L1886.5,1016"/></g>
<path d="M1898,1011 L1915,1011 M1898,1016.5 L1915,1016.5 M1898,1022 L1915,1022" stroke="#e8e8e8" stroke-width="2"/>
<rect x="0" y="44" width="47" height="1" fill="#2a2a2a"/><rect x="96" y="44" width="1821" height="1" fill="#2a2a2a"/>
</svg></body></html>
